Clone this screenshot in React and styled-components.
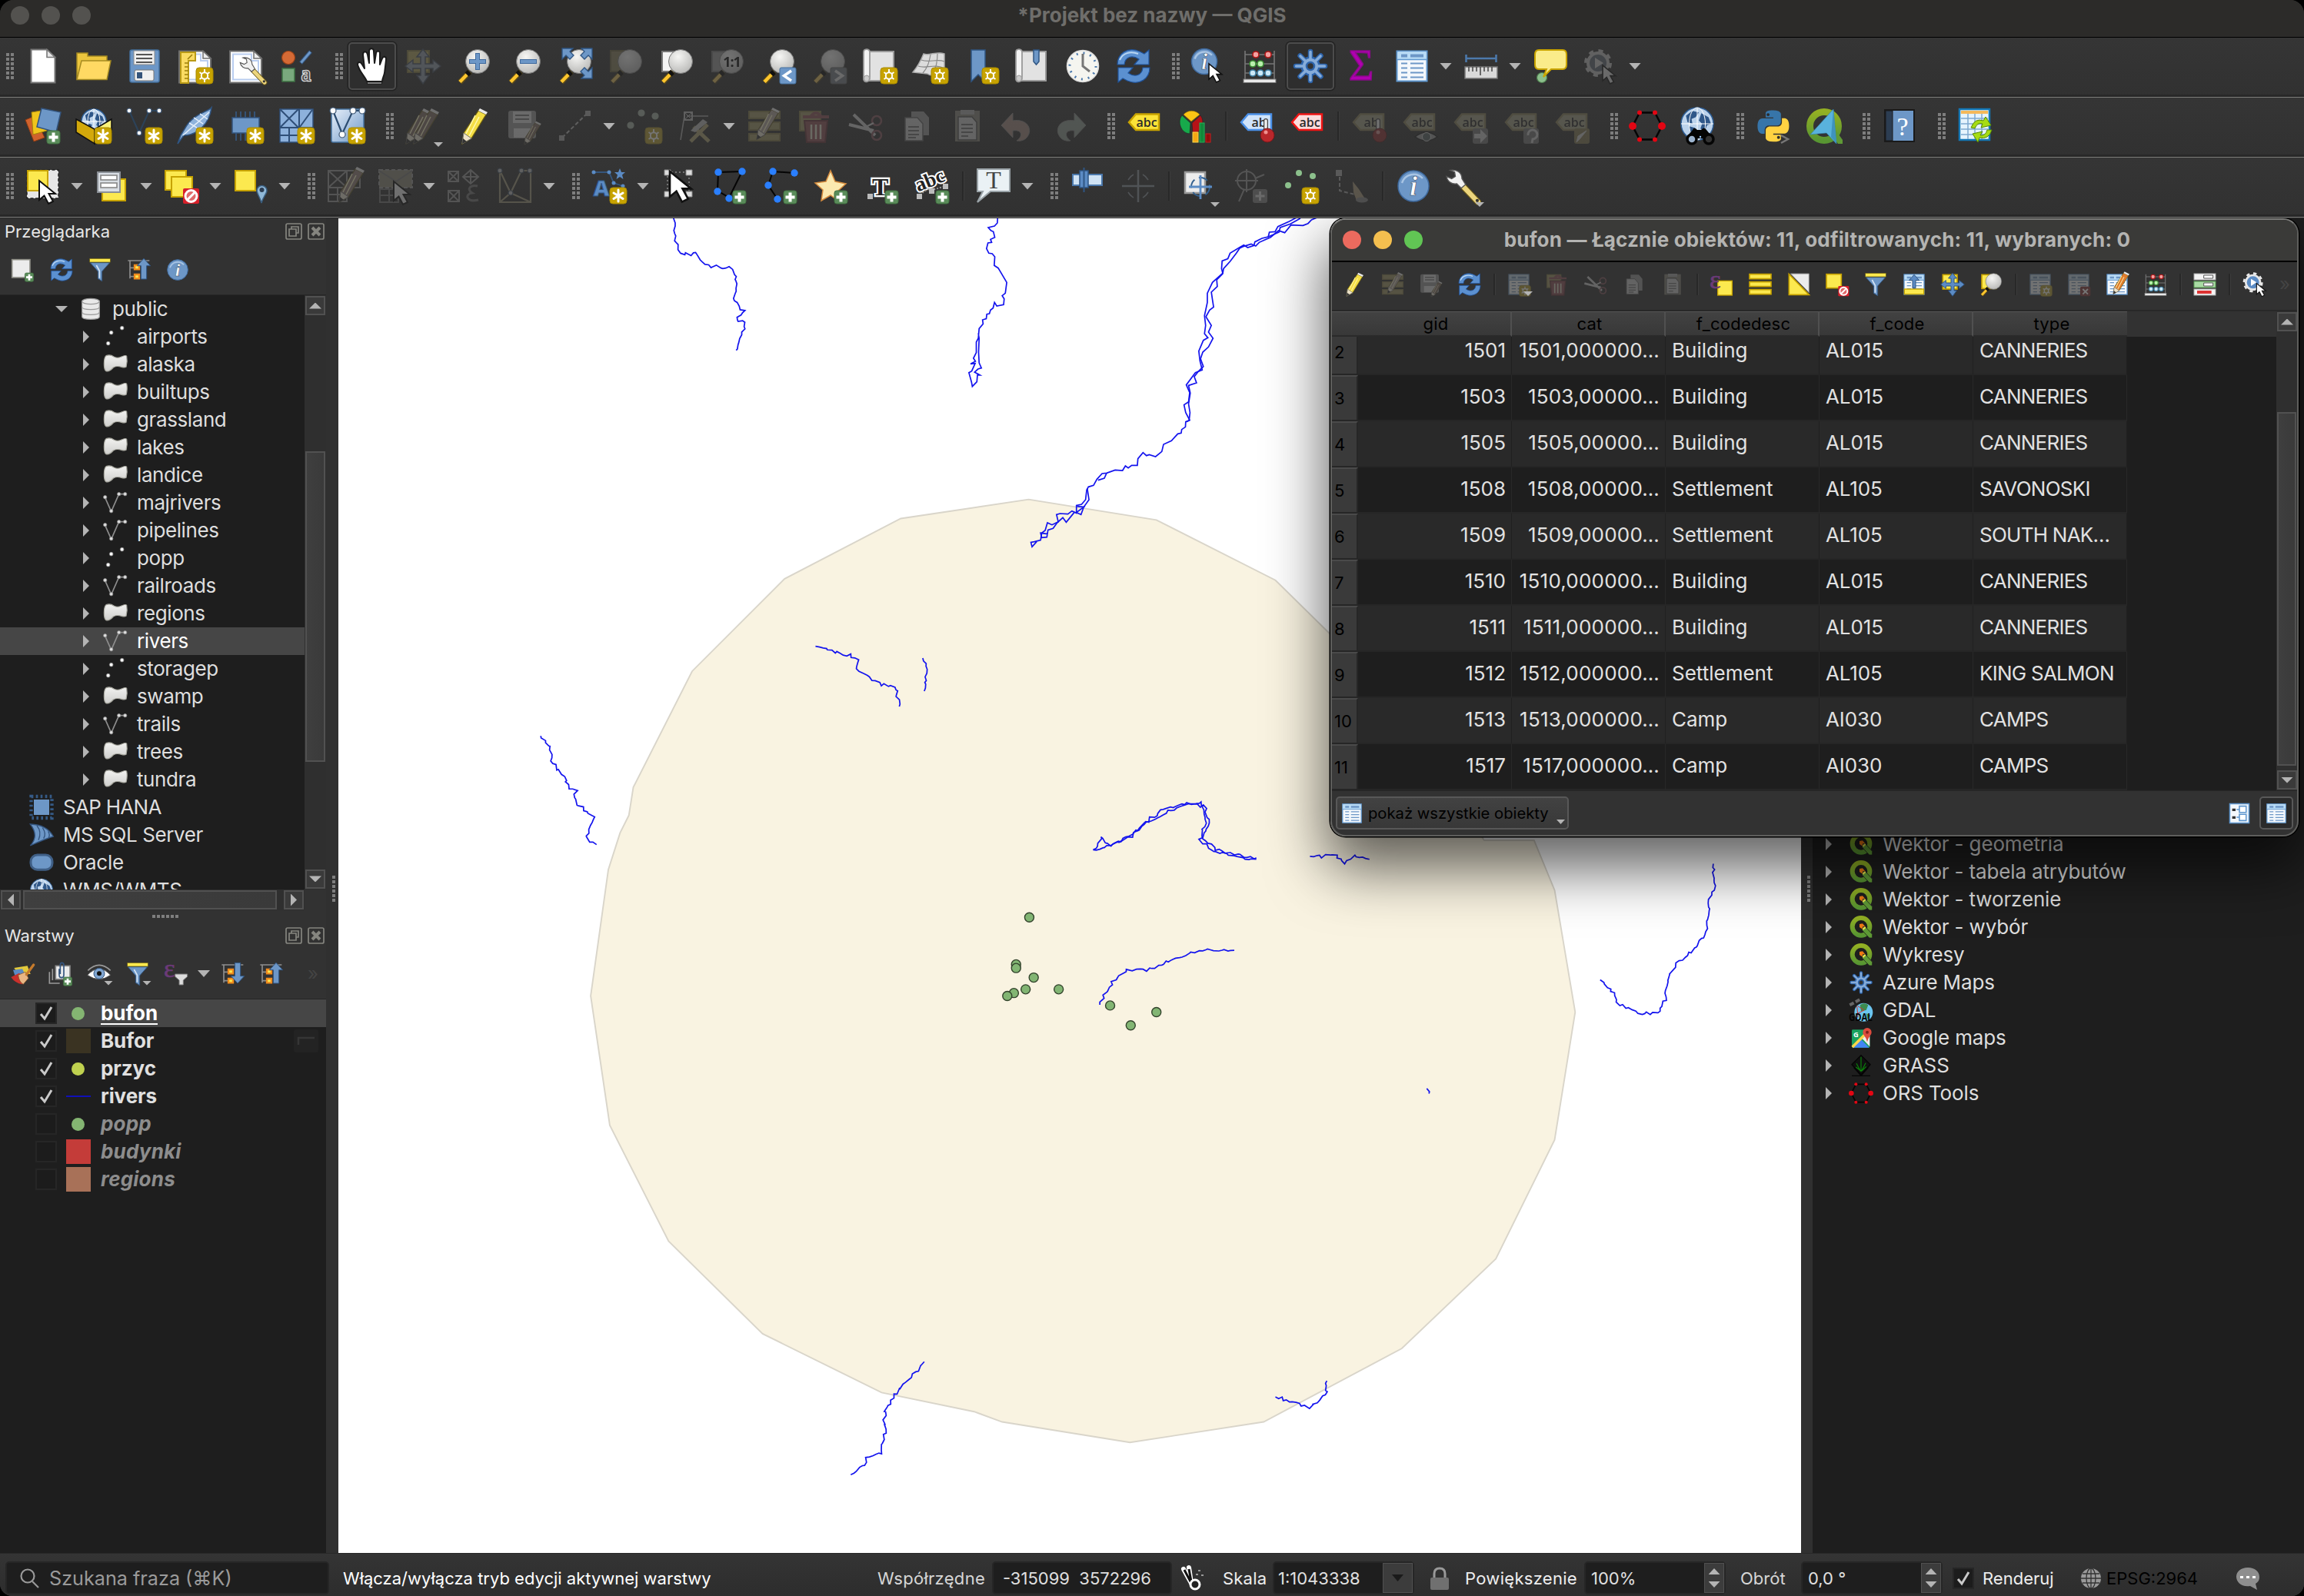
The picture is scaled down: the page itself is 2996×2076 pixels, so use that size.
import React from 'react';
import styled, { createGlobalStyle, css } from 'styled-components';

const sans = "Inter, 'Noto Sans', 'Liberation Sans', sans-serif";

const GlobalStyle = createGlobalStyle`
  * { box-sizing: border-box; }
  body { margin: 0; background: #000; overflow: hidden; font-family: ${sans}; color: #dedede; }
  svg { display: block; flex: none; overflow: visible; }
`;

/* ---------- icon parts ---------- */

const Badge = ({ kind }) => {
  if (kind === 'star')
    return (
      <g>
        <rect x="25" y="26" width="22" height="21" rx="4" fill="#c7a300" stroke="#a98a00" strokeWidth="1" />
        <path d="M36 29v15M30 33l12 7.500M42 33l-12 7.500" stroke="#fff" strokeWidth="3" strokeLinecap="round" />
      </g>
    );
  if (kind === 'sun')
    return (
      <g>
        <rect x="25" y="26" width="22" height="21" rx="4" fill="#c7a300" stroke="#a98a00" strokeWidth="1" />
        <path d="M36 28v17M29.500 32l13 9M42.500 32l-13 9" stroke="#fff" strokeWidth="2" />
        <circle cx="36" cy="36.500" r="4.200" fill="#c7a300" stroke="#fff" strokeWidth="2" />
      </g>
    );
  if (kind === 'plus')
    return (
      <g>
        <rect x="29" y="30" width="17" height="17" rx="3" fill="#5a8c5a" stroke="#417041" strokeWidth="1" />
        <path d="M37.500 32.500v12M31.500 38.500h12" stroke="#fff" strokeWidth="4" />
      </g>
    );
  return (
    <g>
      <rect x="26" y="27" width="21" height="20" rx="2" fill="#d8202a" />
      <circle cx="36.500" cy="37" r="7.500" fill="#e06a6a" stroke="#fff" strokeWidth="3" />
      <path d="M31.500 42l10-10" stroke="#fff" strokeWidth="3" />
    </g>
  );
};

const Cursor = ({ x, y, fill = '#fff', s = 1 }) => (
  <path
    transform={`translate(${x} ${y}) scale(${s})`}
    d="M0 0V25L6.500 19.500L12 30L18 27L12.500 17H21Z"
    fill={fill}
    stroke="#111"
    strokeWidth="2"
  />
);

const Lens = ({ children, fill = 'url(#lens)' }) => (
  <g>
    <path d="M19 31L6 45" stroke="#5b4a1a" strokeWidth="7" />
    <path d="M18 32L6 44.500" stroke="#ffc62e" strokeWidth="4.500" />
    <path d="M18.500 31.500L15 35" stroke="#111" strokeWidth="7" />
    <circle cx="29" cy="18" r="15.500" fill={fill} stroke="#777" strokeWidth="1" />
    {children}
  </g>
);

const Pencil = ({ body = '#f4de45', x = 0, y = 0, s = 1 }) => (
  <g transform={`translate(${x} ${y}) scale(${s})`}>
    <path d="M30 4L40 9L21 40L9 47L11 33Z" fill={body} stroke="#6b5d10" strokeWidth="1.200" />
    <path d="M26 10L14 34M31 12L18 37" stroke="#fff8b0" strokeWidth="1.500" />
    <path d="M30 4L32 1L42 6L40 9Z" fill="#e9e9e9" />
    <path d="M11 33L9 47L21 40Z" fill="#eee3c8" stroke="#777" strokeWidth="1" />
    <path d="M9 47l1-7l5 4z" fill="#333" />
  </g>
);

const Wrench = ({ x = 0, y = 0, s = 1 }) => (
  <g transform={`translate(${x} ${y}) scale(${s})`}>
    <path d="M22 24L42 45" stroke="#6a5a1c" strokeWidth="9" strokeLinecap="round" />
    <path d="M23 25L42 45" stroke="#ecd57d" strokeWidth="6.500" strokeLinecap="round" />
    <circle cx="41" cy="43" r="2.200" fill="#333" />
    <path
      d="M4 1.500C12 0 20 4 20 13L25 21L19 26L13 20C6 21 0 17 -1 10L6 13L11 10L10 4Z"
      fill="#f1f1f1"
      stroke="#555"
      strokeWidth="1.500"
    />
  </g>
);

const Gear = ({ light = '#86acd9', dark = '#2d64ab' }) => {
  const rays = [0, 45, 90, 135, 180, 225, 270, 315];
  return (
    <g>
      {rays.map((a) => (
        <path key={a} transform={`rotate(${a} 24 24)`} d="M24 16V5" stroke={dark} strokeWidth="6.500" strokeLinecap="round" />
      ))}
      <circle cx="24" cy="24" r="11.500" fill={light} stroke={dark} strokeWidth="2.500" />
      {rays.map((a) => (
        <path key={a} transform={`rotate(${a} 24 24)`} d="M24 16V5.500" stroke={light} strokeWidth="3.500" strokeLinecap="round" />
      ))}
      <circle cx="24" cy="24" r="5" fill="#333" stroke={dark} strokeWidth="2.500" />
    </g>
  );
};

const Refresh = () => (
  <g stroke="#1f5299" strokeWidth="1.200">
    <path d="M3 22C3 8 16 -2 32 5L38 8L44 3V22H25L31 15C22 9 13 12 12 22Z" fill="#5b90d0" />
    <path d="M45 26C45 40 32 50 16 43L10 40L4 45V26H23L17 33C26 39 35 36 36 26Z" fill="#5b90d0" />
    <path d="M6 16C10 7 20 4 30 8" stroke="#b9d6f2" strokeWidth="2" fill="none" />
  </g>
);

const Table = () => (
  <g>
    <rect x="4.500" y="4.500" width="39" height="39" fill="#f4f8fc" stroke="#5f97cf" strokeWidth="2" />
    <rect x="5.500" y="5.500" width="37" height="9.500" fill="#b9dcf6" />
    <path d="M4 15.500h40" stroke="#5f97cf" strokeWidth="1.500" />
    <path d="M10 10.500h8M22 10.500h17" stroke="#6d97c7" strokeWidth="4" />
    <path d="M10 20.500h8M22 20.500h17M10 26.500h8M22 26.500h17M10 32.500h8M22 32.500h17M10 38.500h8M22 38.500h17" stroke="#6d97c7" strokeWidth="2" />
  </g>
);

const Tag = ({ fill, stroke, text }) => (
  <g>
    <path d="M4 19L13 8.500H43V29H13Z" fill={fill} stroke={stroke} strokeWidth="2.500" />
    <text x="27" y="24.500" textAnchor="middle" fontFamily="Open Sans, sans-serif" fontWeight="600" fontSize="16" fill="#2c2c2c">
      {text}
    </text>
  </g>
);

const Pin = () => (
  <g>
    <path d="M36 17v12" stroke="#444" strokeWidth="6" strokeLinecap="round" />
    <path d="M36 17v12" stroke="#eee" strokeWidth="3.500" strokeLinecap="round" />
    <circle cx="38" cy="36" r="9" fill="#b9272b" stroke="#7c1518" strokeWidth="1" />
    <circle cx="36" cy="32" r="2.500" fill="#f0908f" />
  </g>
);

const Page = () => (
  <g>
    <path d="M3 4.500H34L44 14V45.500H3Z" fill="#fff" stroke="#6f6f6f" strokeWidth="2" />
    <path d="M7 8.500H31V17H40V41.500H7Z" fill="none" stroke="#b9cdf0" strokeWidth="2" />
    <path d="M34 4.500V14H44Z" fill="#ececec" stroke="#6f6f6f" strokeWidth="1.500" />
  </g>
);

const Scroll = () => (
  <g>
    <path d="M8 5H42V43H8Z" fill="#e2e2e2" stroke="#9a9a9a" strokeWidth="2" />
    <path d="M3 6C3 1 10 1 11 5V38C12 46 2 46 3 40Z" fill="#f3f3f3" stroke="#9a9a9a" strokeWidth="1.800" />
    <ellipse cx="7" cy="40" rx="3.500" ry="4" fill="#ccc" stroke="#9a9a9a" />
  </g>
);

const Funnel = () => (
  <g>
    <path d="M5 10H43L28 27V46L20 41V27Z" fill="#6d97c7" stroke="#33557d" strokeWidth="1.500" />
    <path d="M17 15L23 26V40" stroke="#d5e4f4" strokeWidth="2.500" fill="none" />
    <rect x="4" y="2" width="40" height="7" fill="#fce94f" stroke="#6b5d10" strokeWidth="1" />
  </g>
);

const TreeArrow = ({ down }) => (
  <g>
    <path d="M2 6H44M6 6V41M6 20H14M6 37H14" stroke="#8d8d8d" strokeWidth="2.500" fill="none" />
    <path d="M15 15h9v8h-9zM15 33h9v8h-9z" fill="#fce94f" stroke="#f08b1d" strokeWidth="3.500" />
    <path
      transform={down ? 'rotate(180 33 22)' : undefined}
      d="M33 2L46 16H38.500V42H27.500V16H20Z"
      fill="#6d97c7"
      stroke="#2f5583"
      strokeWidth="1.500"
    />
  </g>
);

const Globe = ({ cx, cy, r }) => (
  <g>
    <circle cx={cx} cy={cy} r={r} fill="#bcd3ec" stroke="#2e5e96" strokeWidth="1.500" />
    <path
      transform={`translate(${cx} ${cy}) scale(${r / 20})`}
      d="M-14 -10L-6 -16L2 -14L-2 -8L-7 -6L-6 0L-12 -2ZM5 -13L14 -8L17 0L12 2L9 10L4 6L6 0L2 -4ZM-10 3L-3 5L-5 13L-9 12Z"
      fill="#2f5789"
    />
    <path d={`M${cx - r} ${cy}H${cx + r}M${cx} ${cy - r}V${cy + r}`} stroke="#fff" strokeWidth="1" />
    <ellipse cx={cx} cy={cy} rx={r / 2} ry={r} fill="none" stroke="#fff" strokeWidth="1" />
  </g>
);

const Info = ({ cx = 24, cy = 24, r = 20 }) => (
  <g>
    <circle cx={cx} cy={cy} r={r} fill="#6d97c7" stroke="#3f6a9e" strokeWidth="1.500" />
    <path d={`M${cx - r * 0.75} ${cy - r * 0.2}A${r * 0.8} ${r * 0.8} 0 0 1 ${cx + r * 0.6} ${cy - r * 0.5}`} stroke="#a9c5e4" strokeWidth="2.500" fill="none" />
    <text x={cx} y={cy + r * 0.62} textAnchor="middle" fontFamily="Liberation Serif, serif" fontStyle="italic" fontWeight="700" fontSize={r * 1.8} fill="#fff" stroke="#33445a" strokeWidth=".6">
      i
    </text>
  </g>
);

const Abacus = () => {
  const rows = [
    [9, [19, 35], '#f4a0a0', '#b01515'],
    [21, [15, 25], '#b9efae', '#3c8f34'],
    [33, [15, 25, 35], '#cde9f7', '#3f7fa3'],
  ];
  return (
    <g>
      <path d="M5 4V42M43 4V42M5 9H43M5 21H43M5 33H43" stroke="#777" strokeWidth="1.600" />
      {rows.map(([y, xs, f, s]) => xs.map((x) => <circle key={`${x}-${y}`} cx={x} cy={y} r="4" fill={f} stroke={s} strokeWidth="1.600" />))}
      <rect x="3" y="41" width="42" height="4.500" fill="#e8e8e8" stroke="#777" />
    </g>
  );
};

const Abc = ({ children, x, y, size, ...rest }) => (
  <text x={x} y={y} fontFamily="Liberation Serif, serif" fontWeight="700" fontSize={size} fill="#fff" {...rest}>
    {children}
  </text>
);

const Node = ({ x, y, r = 3, fill = '#fff', stroke = '#3d5674' }) => <circle cx={x} cy={y} r={r} fill={fill} stroke={stroke} strokeWidth="1.200" />;

const Epsilon = ({ x, y, size }) => (
  <text x={x} y={y} fontFamily="Liberation Serif, serif" fontSize={size} fill="#6b3a78" stroke="#6b3a78" strokeWidth="1">
    ε
  </text>
);

const snake =
  'M14.250.180l.9.200.730.260.590.300.450.320.340.340.250.340.160.330.100.300.040.260.020.200V8.500l-.050.630-.130.550-.210.460-.260.380-.300.310-.330.250-.350.190-.350.140-.330.100-.300.070-.260.040H8.770l-.690.050-.590.140-.500.220-.410.270-.330.320-.270.350-.200.360-.150.370-.100.350-.070.320-.040.270-.020.210v3.060H3.170l-.490-.100-.320-.120-.350-.180-.360-.260-.360-.360-.350-.460-.320-.590-.280-.730-.210-.880-.140-1.050-.050-1.230.060-1.220.160-1.040.240-.870.320-.710.360-.570.400-.440.420-.330.420-.240.400-.160.360-.100.320-.050.400-.010h8.220v-.830H6.180l-.010-2.750-.020-.370.050-.340.110-.310.170-.280.250-.260.310-.230.380-.200.440-.180.510-.150.580-.120.640-.100.710-.060 1.610-.060z';

const icons = {
  new: (
    <g>
      <path d="M8.500 2.500H29L39.500 12.500V45.500H8.500Z" fill="#fff" stroke="#777" strokeWidth="2" />
      <path d="M29 2.500V12.500H39.500Z" fill="#e6e6e6" stroke="#777" strokeWidth="1.600" />
    </g>
  ),
  open: (
    <g>
      <path d="M2 7H16V11H41V18H9L2 41Z" fill="#ecc63e" stroke="#a58a22" strokeWidth="1.500" />
      <path d="M8 17H46L41 41.500H2Z" fill="#ffd963" stroke="#a58a22" strokeWidth="1.500" />
    </g>
  ),
  save: (
    <g>
      <rect x="5" y="3" width="38" height="42" rx="2.500" fill="#6d97c7" stroke="#44719f" strokeWidth="1.500" />
      <rect x="10" y="4" width="27" height="18" fill="#f0f0f0" stroke="#8b8b8b" />
      <path d="M13 9h21M13 14h21M13 19h21" stroke="#555" strokeWidth="1.800" />
      <rect x="11" y="29" width="25" height="14" rx="2" fill="#f0f0f0" stroke="#777" />
      <rect x="14" y="32" width="7" height="8" fill="#34537a" />
    </g>
  ),
  newlayout: (
    <g>
      <Page />
      <path d="M5 6H24V17H15V46H5Z" fill="#fadb62" stroke="#b99a16" strokeWidth="2" />
      <path d="M10 20h5M10 25h5M10 30h5M10 35h5M10 40h5M20 9l-6 6" stroke="#9a7e0a" strokeWidth="1.500" />
      <Badge kind="sun" />
    </g>
  ),
  layoutmgr: (
    <g>
      <Page />
      <Wrench x="17" y="12" s=".74" />
    </g>
  ),
  style: (
    <g>
      <circle cx="13" cy="13" r="8.500" fill="#d56a35" stroke="#9c4318" strokeWidth="1.200" />
      <path d="M29 20L42 5" stroke="#33547e" strokeWidth="5" />
      <path d="M29.500 19.500L41.500 5.500" stroke="#6d97c7" strokeWidth="3" />
      <rect x="5" y="27" width="16" height="17" fill="#7aa97e" stroke="#3f7345" strokeWidth="1.500" />
      <text x="36" y="43" textAnchor="middle" fontFamily="Liberation Serif, serif" fontSize="27" fill="#555" stroke="#ddd" strokeWidth="2.500" paintOrder="stroke">
        a
      </text>
    </g>
  ),
  hand: (
    <g>
      <path
        d="M17 44C15 38 7 31 5 22C5 18 9 18 11 22L14 27L12 9C12 4 17 4 18 9L20 20V5C20 0 26 0 26 5L27 20L29 7C30 3 35 4 34 9L34 22L37 14C39 10 43 12 42 16L40 33C39 38 37 40 37 44Z"
        fill="#fff"
        stroke="#1a1a1a"
        strokeWidth="2"
        strokeLinejoin="round"
      />
      <path d="M17 46H37" stroke="#1a1a1a" strokeWidth="3" />
      <path d="M18 46H36" stroke="#ddd" strokeWidth="1" />
    </g>
  ),
  pansel: (
    <g>
      <rect x="4" y="4" width="28" height="28" fill="#b8a53c" stroke="#8a7b2e" strokeWidth="2" />
      <path d="M24 2l8 10h-5v9h10v-5l10 8l-10 8v-5H27v9h5l-8 11l-8-11h5v-9H11v5L1 24l10-8v5h10V12h-5z" fill="#8b9db4" stroke="#44556d" strokeWidth="1.500" />
    </g>
  ),
  zoomin: (
    <Lens>
      <path d="M29 7V29M18 18H40" stroke="#3f6a9e" strokeWidth="6" />
      <path d="M29 8V28M19 18H39" stroke="#6d97c7" strokeWidth="4" />
    </Lens>
  ),
  zoomout: (
    <Lens>
      <path d="M18 18H40" stroke="#3f6a9e" strokeWidth="6" />
      <path d="M19 18H39" stroke="#6d97c7" strokeWidth="4" />
    </Lens>
  ),
  zoomfull: (
    <g>
      <Lens />
      <g fill="#6d97c7" stroke="#2f5583" strokeWidth="1.300">
        <path d="M7 1H21L17 5L22 10L17 15L12 10L7 15Z" />
        <path d="M46 1H32L36 5L31 10L36 15L41 10L46 15Z" />
        <path d="M46 40H32L36 36L31 31L36 26L41 31L46 26Z" />
      </g>
    </g>
  ),
  zoomsel: (
    <g>
      <rect x="4" y="4" width="30" height="27" fill="#8d824a" stroke="#6e6532" strokeWidth="2" />
      <Lens />
    </g>
  ),
  zoomlayer: (
    <g>
      <rect x="5" y="5" width="28" height="26" fill="#f4f4f4" stroke="#777" strokeWidth="2" />
      <Lens />
    </g>
  ),
  zoomnative: (
    <g>
      <rect x="4" y="5" width="30" height="26" fill="#999" stroke="#777" strokeWidth="2" />
      <Lens>
        <text x="29.500" y="25" textAnchor="middle" fontFamily="Open Sans, sans-serif" fontWeight="700" fontSize="18" letterSpacing="-1" fill="#111">
          1:1
        </text>
      </Lens>
    </g>
  ),
  zoomlast: (
    <g>
      <Lens />
      <rect x="26" y="26" width="21" height="21" rx="2" fill="#6d97c7" stroke="#44719f" />
      <path d="M41 30L31.500 36.500L41 43" stroke="#fff" strokeWidth="3.500" fill="none" />
    </g>
  ),
  zoomnext: (
    <g>
      <Lens />
      <rect x="26" y="26" width="21" height="21" rx="2" fill="#77828e" stroke="#666" />
      <path d="M32 30L41.500 36.500L32 43" stroke="#ddd" strokeWidth="3.500" fill="none" />
    </g>
  ),
  newmap: (
    <g>
      <Scroll />
      <Badge kind="sun" />
    </g>
  ),
  new3d: (
    <g>
      <path d="M15 8C22 11 33 4 42 8V34C33 30 28 40 20 34L1 32C6 26 11 18 15 8Z" fill="#dcdcdc" stroke="#aaa" strokeWidth="1.500" />
      <path d="M12 16C22 20 33 14 42 18M8 24C18 28 30 20 42 27M24 9C22 20 20 26 14 33M33 8C33 18 31 26 28 34" stroke="#888" strokeWidth="1.200" fill="none" />
      <Badge kind="sun" />
    </g>
  ),
  bookmark: (
    <g>
      <path d="M14 3H32V44L23 35L14 44Z" transform="translate(-3 0)" fill="#6d97c7" stroke="#2f5583" strokeWidth="1.500" />
      <Badge kind="sun" />
    </g>
  ),
  bookmarks: (
    <g>
      <Scroll />
      <path d="M26 3H33V18L29.500 22L26 18Z" fill="#6d97c7" stroke="#2f5583" strokeWidth="1.500" />
    </g>
  ),
  clock: (
    <g>
      <circle cx="24" cy="24" r="20.500" fill="#f5f5f0" stroke="#ddd" strokeWidth="1.500" />
      <circle cx="24" cy="24" r="17" fill="none" stroke="#4c79ac" strokeWidth="3" strokeDasharray="2 6.900" />
      <path d="M24 8V24L33 31" stroke="#777" strokeWidth="3" fill="none" />
    </g>
  ),
  refresh: <Refresh />,
  identify: (
    <g>
      <Info cx={18} cy={18} r={16.5} />
      <Cursor x="24" y="21" s=".8" />
    </g>
  ),
  abacus: <Abacus />,
  gear: <Gear />,
  sigma: (
    <text x="24" y="42" textAnchor="middle" fontFamily="Liberation Serif, serif" fontWeight="400" fontSize="56" fill="#b100b1" stroke="#8a0a8a" strokeWidth="1.500">
      Σ
    </text>
  ),
  table: <Table />,
  ruler: (
    <g>
      <path d="M4 14H44M4.500 9V19M43.500 9V19" stroke="#4c79ac" strokeWidth="2.500" />
      <rect x="3" y="25" width="42" height="15" fill="#d9d9d9" stroke="#777" strokeWidth="1.500" />
      <path d="M8 25v6M13 25v6M18 25v6M23 25v11M28 25v6M33 25v6M38 25v6" stroke="#444" strokeWidth="1.500" />
    </g>
  ),
  tip: (
    <g>
      <circle cx="13" cy="39" r="6.500" fill="#8cc08c" stroke="#4e7d4e" strokeWidth="1.200" />
      <path d="M9 3H40Q45 3 45 9V22Q45 28 40 28H25L15 38L19 28H9Q4 28 4 22V9Q4 3 9 3Z" fill="#faec8a" stroke="#c9a400" strokeWidth="2" />
    </g>
  ),
  gearcursor: (
    <g>
      <circle cx="20" cy="20" r="13" fill="#5c6a7b" stroke="#c0c0c0" strokeWidth="4" />
      <circle cx="20" cy="20" r="16" fill="none" stroke="#c0c0c0" strokeWidth="4" strokeDasharray="6 6.560" />
      <path d="M16 13L27 20L16 27Z" fill="#ccc" />
      <Cursor x="26" y="23" s=".8" fill="#ddd" />
    </g>
  ),
  layers: (
    <g>
      <path d="M1 16L13 11L26 39L12 44Z" fill="#d0622d" stroke="#8d3b12" />
      <path d="M9 6L27 3L29 30L11 35Z" fill="#f0c51c" stroke="#a5830a" />
      <path d="M22 1L47 6L41 32L16 25Z" fill="#6d97c7" stroke="#33547e" strokeWidth="1.500" />
      <Badge kind="plus" />
    </g>
  ),
  geopackage: (
    <g>
      <Globe cx={24} cy={18} r={16} />
      <path d="M1 15L25 28V47L1 32Z" fill="#d3a90b" stroke="#111" strokeWidth="1.500" />
      <path d="M47 15L25 28V47L47 32Z" fill="#fdf37a" stroke="#111" strokeWidth="1.500" />
      <Badge kind="star" />
    </g>
  ),
  shapefile: (
    <g>
      <path d="M4 4L17 33L30 4H43" stroke="#2c4258" strokeWidth="2.200" fill="none" />
      <Node x="4" y="4" />
      <Node x="17" y="33" />
      <Node x="30" y="4" />
      <Node x="43" y="4" />
      <Badge kind="star" />
    </g>
  ),
  spatialite: (
    <g>
      <path d="M45 0C40 6 20 8 10 28L5 36L1 47L9 36C26 36 42 22 45 0Z" fill="#8fb3dc" stroke="#2f5583" strokeWidth="1.500" />
      <path d="M42 6L8 36M16 20L26 26M22 13L34 21M30 8L40 15" stroke="#e5effa" strokeWidth="1.500" />
      <Badge kind="star" />
    </g>
  ),
  memory: (
    <g>
      <path d="M11 5v38M17 5v38M23 5v38M29 5v38M35 5v38" stroke="#355a86" strokeWidth="1.600" />
      <rect x="6" y="13" width="35" height="20" fill="#6d97c7" stroke="#33547e" strokeWidth="1.500" />
      <Badge kind="star" />
    </g>
  ),
  mesh: (
    <g>
      <rect x="2" y="2" width="43" height="43" fill="#8db1dc" stroke="#2f4f78" strokeWidth="1.500" />
      <path d="M2 26H45M27 2V26M2 2L26 26M26 2L2 26M44 3L28 25M14 27V45M27 27V45M2 36H27" stroke="#2f4f78" strokeWidth="2" />
      <Badge kind="star" />
    </g>
  ),
  vlayer: (
    <g>
      <rect x="3" y="2" width="42" height="43" rx="2" fill="url(#vgrad)" stroke="#44719f" strokeWidth="1.500" />
      <path d="M5 4L17 34L31 4H44" stroke="#2c4c70" strokeWidth="2.200" fill="none" />
      <Node x="5" y="4" r="4" />
      <Node x="17" y="35" r="4" />
      <Node x="31" y="4" r="4" />
      <Node x="43" y="4" r="4" />
      <Badge kind="star" />
    </g>
  ),
  edits: (
    <g>
      <Pencil body="#8d6f62" x="-7" />
      <Pencil body="#8d6f62" x="3" />
    </g>
  ),
  pencil: <Pencil />,
  saveedits: (
    <g>
      <rect x="3" y="4" width="36" height="36" rx="3" fill="#999" />
      <rect x="9" y="5" width="24" height="15" fill="#ddd" />
      <path d="M12 10h18M12 15h18" stroke="#555" strokeWidth="1.600" />
      <rect x="10" y="27" width="22" height="12" fill="#ddd" />
      <Pencil body="#8d6f62" x="18" y="17" s=".66" />
    </g>
  ),
  digitize: (
    <g>
      <path d="M7 39L40 7" stroke="#bbb" strokeWidth="2" strokeDasharray="5 3" />
      <rect x="3" y="36" width="7" height="7" fill="#aaa" />
      <rect x="37" y="4" width="7" height="7" fill="#aaa" />
    </g>
  ),
  points: (
    <g>
      <Node x="20" y="7" r="4" fill="#9fb39f" stroke="#9fb39f" />
      <Node x="38" y="11" r="4" fill="#9fb39f" stroke="#9fb39f" />
      <Node x="6" y="23" r="4" fill="#9fb39f" stroke="#9fb39f" />
      <Badge kind="sun" />
    </g>
  ),
  vertex: (
    <g>
      <path d="M10 11L5 42M13 11H41" stroke="#aaa" strokeWidth="1.600" />
      <rect x="10" y="6" width="10" height="10" fill="none" stroke="#bbb" strokeWidth="2" />
      <path d="M11 7l8 8M19 7l-8 8" stroke="#bbb" />
      <path d="M18 44L40 22" stroke="#b5a65c" strokeWidth="5" />
      <path d="M22 25L42 44" stroke="#b5a65c" strokeWidth="5" />
      <path d="M18 30L34 15L40 19L24 32Z" fill="#bbb" />
    </g>
  ),
  modify: (
    <g>
      <path d="M4 5H44V14H4ZM4 19H44V29H4ZM4 34H44V43H4Z" fill="#a89a50" stroke="#8a7c33" strokeWidth="2" />
      <Pencil body="#b8a596" x="6" y="-1" s=".9" />
    </g>
  ),
  trash: (
    <g>
      <rect x="4" y="5" width="27" height="25" fill="#a89a50" stroke="#8a7c33" strokeWidth="2" />
      <path d="M10 17H40L37 45H13Z" fill="#a94e57" stroke="#7d333b" strokeWidth="2" />
      <path d="M8 12H42M18 12Q25 2 32 12" stroke="#a94e57" strokeWidth="4" fill="none" />
      <path d="M19 22V41M25 22V41M31 22V41" stroke="#ddb" strokeWidth="2.500" />
    </g>
  ),
  cut: (
    <g fill="none" stroke="#ccc" strokeWidth="2.500">
      <path d="M2 22L34 30M8 9L36 36" strokeWidth="4" />
      <circle cx="38" cy="17" r="6" stroke="#9c5560" />
      <circle cx="38" cy="36" r="6" stroke="#9c5560" />
      <path d="M22 26L34 20" />
    </g>
  ),
  copy: (
    <g>
      <path d="M17 5H33L40 13V36H17Z" fill="#999" />
      <path d="M9 13H25L32 21V43H9Z" fill="#ccc" stroke="#666" strokeWidth="1.500" />
      <path d="M13 25h14M13 30h14M13 35h14M13 39h10" stroke="#555" strokeWidth="1.600" />
    </g>
  ),
  paste: (
    <g>
      <rect x="8" y="4" width="32" height="40" fill="#8b8775" />
      <path d="M12 12H30L36 19V42H12Z" fill="#ccc" stroke="#555" strokeWidth="1.500" />
      <path d="M15 3H33V9H15Z" fill="#aaa" />
      <path d="M16 22h15M16 27h15M16 32h15M16 37h9" stroke="#555" strokeWidth="1.600" />
    </g>
  ),
  undo: <path d="M17 7V17C36 14 42 28 37 36C34 42 28 44 22 43C30 38 30 28 17 30V39L2 23Z" fill="#b08a7a" stroke="#888" />,
  redo: <path d="M31 7V17C12 14 6 28 11 36C14 42 20 44 26 43C18 38 18 28 31 30V39L46 23Z" fill="#8aa090" stroke="#888" />,
  tag: <Tag fill="#fbe338" stroke="#c9a400" text="abc" />,
  chart: (
    <g>
      <path d="M19 18L9 9A14 14 0 0 1 30 9Z" fill="#fdc414" stroke="#8b6b00" strokeWidth=".6" />
      <path d="M18 20L7 10A14 15 0 0 0 17 34Z" fill="#17a94b" stroke="#222" strokeWidth=".6" />
      <path d="M20 20L31 10A14 15 0 0 1 21 34Z" fill="#b51217" stroke="#222" strokeWidth=".6" />
      <rect x="21" y="32" width="7" height="13" fill="#f6a713" stroke="#f7d94c" />
      <rect x="30" y="20" width="6" height="25" fill="#12883b" stroke="#22b358" />
      <rect x="38" y="34" width="6" height="11" fill="#8e0d0d" stroke="#c81d1d" />
    </g>
  ),
  tagpin: (
    <g>
      <Tag fill="#cfe3fb" stroke="#4a90e8" text="ab " />
      <Pin />
    </g>
  ),
  tagred: <Tag fill="#fbdcdc" stroke="#f01414" text="abc" />,
  tagpinoff: (
    <g>
      <Tag fill="#a59f7a" stroke="#8f8248" text="ab" />
      <Pin />
    </g>
  ),
  tageye: (
    <g>
      <Tag fill="#a59f7a" stroke="#8f8248" text="abc" />
      <path d="M18 38Q33 26 47 38Q33 48 18 38Z" fill="#999" stroke="#222" strokeWidth="1.500" />
      <circle cx="33" cy="38" r="5.500" fill="#566" stroke="#ccc" />
    </g>
  ),
  tagmove: (
    <g>
      <Tag fill="#a59f7a" stroke="#8f8248" text="abc" />
      <rect x="27" y="27" width="20" height="20" rx="3" fill="#777" />
      <path d="M29 34h8v-6l9 9l-9 9v-6h-8z" fill="#ccc" />
    </g>
  ),
  tagrotate: (
    <g>
      <Tag fill="#a59f7a" stroke="#8f8248" text="abc" />
      <rect x="27" y="27" width="20" height="20" rx="3" fill="#777" />
      <path d="M33 36a6 6 0 1 1 6 5l-1 5" stroke="#ccc" strokeWidth="3" fill="none" />
    </g>
  ),
  tagedit: (
    <g>
      <Tag fill="#a59f7a" stroke="#8f8248" text="abc" />
      <rect x="27" y="27" width="20" height="20" rx="3" fill="#8a7d40" />
      <path d="M43 30l-9 11l-4 4l2-8z" fill="#ccc" stroke="#ccc" />
    </g>
  ),
  ors: (
    <g>
      <path d="M14 6.500H34L43 24L34 41.500H14L5 24Z" fill="none" stroke="#050505" strokeWidth="2.500" />
      <g fill="#e30613">
        <circle cx="5" cy="24" r="5" />
        <circle cx="43" cy="24" r="5" />
        <circle cx="14" cy="6.500" r="3" />
        <circle cx="34" cy="6.500" r="3" />
        <circle cx="14" cy="41.500" r="3" />
        <circle cx="34" cy="41.500" r="3" />
      </g>
    </g>
  ),
  metasearch: (
    <g>
      <Globe cx={23} cy={21} r={21} />
      <path d="M17 29Q19 24 23 29H28Q32 24 35 29L44 40H8Z" fill="#050505" />
      <circle cx="16" cy="41" r="6" fill="#9db4cf" stroke="#050505" strokeWidth="3.500" />
      <circle cx="38" cy="41" r="6" fill="#333" stroke="#050505" strokeWidth="3.500" />
      <circle cx="27" cy="38" r="1.200" fill="#9cf" />
    </g>
  ),
  python: (
    <g>
      <g transform="translate(3.500 3.500) scale(1.700)">
        <path d={snake} fill="#3775a9" />
        <circle cx="8" cy="3.300" r="1.150" fill="#2c2c2c" />
        <g transform="rotate(180 12 12)">
          <path d={snake} fill="#ffd242" />
          <circle cx="8" cy="3.300" r="1.150" fill="#2c2c2c" />
        </g>
      </g>
      <path d="M34 36L43 41L34 46" stroke="#777" strokeWidth="2.500" fill="none" />
    </g>
  ),
  qgis: (
    <g>
      <circle cx="24" cy="24" r="18.500" fill="none" stroke="url(#qg)" strokeWidth="9" />
      <path d="M30 32L38 28L48 42V47H42Z" fill="#5f9a36" />
      <path d="M36 2L40 47L27 33L6 35Z" fill="#59b2dc" stroke="#2f7fa6" strokeWidth=".6" />
      <path d="M36 2L40 47L33 38Z" fill="#3f93bd" />
    </g>
  ),
  help: (
    <g>
      <rect x="5" y="3" width="38" height="41" fill="#6d97c7" stroke="#1a1a1a" strokeWidth="2" />
      <rect x="6" y="4" width="9" height="39" fill="#2c3d52" stroke="#1a1a1a" />
      <text x="28" y="36" textAnchor="middle" fontFamily="Liberation Serif, serif" fontSize="34" fill="#fff">
        ?
      </text>
    </g>
  ),
  sheet: (
    <g>
      <rect x="4" y="2" width="39" height="40" fill="#e6f4fd" stroke="#1477b5" strokeWidth="2.500" />
      <rect x="6" y="4" width="35" height="4" fill="#f5b95a" />
      <path d="M6 14H41M6 21H41M6 28H41M6 35H41M15 8V41M24 8V41M33 8V41" stroke="#7fa9d0" strokeWidth="1.500" />
      <path d="M19 26Q24 13 35 17L38 12L45 23L32 26L34 21Q27 19 24 27Z" fill="#a6dc14" stroke="#568a06" strokeWidth="1" />
      <path d="M46 29Q42 42 30 39L28 45L21 34L34 31L31 36Q38 37 40 29Z" fill="#a6dc14" stroke="#568a06" strokeWidth="1" />
    </g>
  ),
  select: (
    <g>
      <rect x="3" y="3" width="41" height="37" fill="#e6e6e6" stroke="#222" strokeWidth="1.500" strokeDasharray="4 2.500" />
      <rect x="4" y="4" width="26" height="26" fill="#fce94f" stroke="#c7a300" strokeWidth="2" />
      <Cursor x="19" y="17" />
    </g>
  ),
  selform: (
    <g>
      <rect x="11" y="15" width="30" height="28" fill="#fce94f" stroke="#c7a300" strokeWidth="2" />
      <rect x="5" y="6" width="29" height="26" fill="#d9dee4" stroke="#8b9097" strokeWidth="2" />
      <rect x="9" y="10" width="21" height="6" fill="#fff" stroke="#888" strokeWidth="1.600" />
      <rect x="9" y="20" width="21" height="6" fill="#fff" stroke="#888" strokeWidth="1.600" />
    </g>
  ),
  deselect: (
    <g>
      <rect x="3" y="4" width="27" height="25" fill="#fce94f" stroke="#c7a300" strokeWidth="2" />
      <rect x="11" y="12" width="27" height="26" fill="#fce94f" stroke="#c7a300" strokeWidth="2" />
      <Badge kind="no" />
    </g>
  ),
  selloc: (
    <g>
      <rect x="4" y="4" width="26" height="26" fill="#fce94f" stroke="#c7a300" strokeWidth="2" />
      <path d="M38 46C36 38 32 34 32 30A6.500 6.500 0 0 1 45 30C45 34 40 38 38 46Z" fill="#8fb8d8" stroke="#3b5f80" strokeWidth="1.500" />
      <circle cx="38.500" cy="29" r="3" fill="#2c3d52" />
    </g>
  ),
  meshedit: (
    <g>
      <path d="M3 4H44V26H27V44H3ZM3 26H27V4M3 4L27 26M27 4L3 26M15 26V44M3 35H27M44 4L30 25" stroke="#999" strokeWidth="2" fill="none" />
      <Pencil body="#9c7f75" x="8" y="-2" />
    </g>
  ),
  meshsel: (
    <g>
      <path d="M3 3H46V26H3Z" fill="#8f8a70" stroke="#999" strokeWidth="2" strokeDasharray="5 3" />
      <path d="M3 4L25 18L46 4M4 28H28V45H4ZM16 28V45M4 36H28" stroke="#777" strokeWidth="2" fill="none" />
      <Cursor x="22" y="18" fill="#eee" />
    </g>
  ),
  meshtrans: (
    <g stroke="#999" strokeWidth="2" fill="none">
      <path d="M3 5H16V18H3ZM3 5L16 18M16 5L3 18M3 30H17V44H3ZM3 30L17 44M17 30L3 44M32 3L42 12L32 21L22 12ZM22 12H42M32 3V21" />
      <path d="M41 24C32 22 26 28 34 33C24 34 26 46 42 42" stroke="#777" strokeWidth="3" />
    </g>
  ),
  meshdigit: (
    <g>
      <path d="M4 4L18 33L32 4H43M4 4V45H44V4M18 33L4 45M18 33L44 45" stroke="#a59a70" strokeWidth="2.200" fill="none" />
      <Node x="4" y="4" fill="#bbb" />
      <Node x="18" y="33" fill="#bbb" />
      <Node x="32" y="4" fill="#bbb" />
      <Node x="43" y="4" fill="#bbb" />
    </g>
  ),
  annolayer: (
    <g>
      <path d="M4 6H24L30 20L42 24" stroke="#35567d" strokeWidth="1.800" fill="none" />
      <path d="M38 1l2 5h5l-4 3.500l1.500 5.500l-4.500-3l-4.500 3L35 9.500L31 6h5z" fill="#5b8bc4" />
      <circle cx="4" cy="6" r="2.500" fill="#5b8bc4" />
      <circle cx="24" cy="6" r="2.500" fill="#5b8bc4" />
      <circle cx="30" cy="20" r="2.500" fill="#5b8bc4" />
      <circle cx="42" cy="24" r="2.500" fill="#5b8bc4" />
      <text x="14" y="37" textAnchor="middle" fontFamily="Open Sans, sans-serif" fontWeight="800" fontSize="29" fill="#5b8bc4" stroke="#2f5583">
        A
      </text>
      <Badge kind="star" />
    </g>
  ),
  annosel: (
    <g>
      <rect x="10" y="6" width="28" height="28" fill="none" stroke="#888" strokeWidth="1.500" strokeDasharray="2 3" />
      <path d="M6 3h8v7h-8zM34 3h8v7h-8zM6 31h8v7h-8zM34 31h8v7h-8z" fill="#ddd" stroke="#888" />
      <Cursor x="13" y="5" s="1.320" />
    </g>
  ),
  annopoly: (
    <g>
      <path d="M10 6L41 5L24 39L9 30Z" fill="none" stroke="#050505" strokeWidth="2" />
      <g fill="#2a7fff">
        <circle cx="10" cy="6" r="4.700" />
        <circle cx="41" cy="5" r="4.700" />
        <circle cx="24" cy="40" r="4.700" />
        <circle cx="9" cy="31" r="4.700" />
      </g>
      <Badge kind="plus" />
    </g>
  ),
  annoline: (
    <g>
      <path d="M43 7L15 5L9 23L21 41" fill="none" stroke="#050505" strokeWidth="2" />
      <g fill="#2a7fff">
        <circle cx="43" cy="7" r="4.700" />
        <circle cx="15" cy="5" r="4.700" />
        <circle cx="9" cy="23" r="4.700" />
        <circle cx="21" cy="41" r="4.700" />
      </g>
      <Badge kind="plus" />
    </g>
  ),
  annostar: (
    <g>
      <path d="M24 4L30 18L44 21L34 30L35 44L24 36L12 43L14 29L4 20L18 18Z" fill="#fbe9b0" stroke="#d58b3e" strokeWidth="1.500" />
      <Badge kind="plus" />
    </g>
  ),
  annotext: (
    <g>
      <Abc x="12" y="36" size="32" fill="#222" stroke="#fff" strokeWidth="4.500" paintOrder="stroke">
        T
      </Abc>
      <rect x="6" y="34" width="7" height="7" fill="#bbb" />
      <Badge kind="plus" />
    </g>
  ),
  annocurve: (
    <g>
      <g transform="rotate(-22 24 20)">
        <Abc x="3" y="24" size="26" fill="#222" stroke="#fff" strokeWidth="4" paintOrder="stroke">
          abc
        </Abc>
      </g>
      <path d="M9 36Q16 26 28 28L42 24" stroke="#999" strokeWidth="2" strokeDasharray="2 2" fill="none" />
      <path d="M4 34h7v7h-7zM20 27h7v7h-7zM38 21h7v7h-7z" fill="#bbb" />
      <Badge kind="plus" />
    </g>
  ),
  callout: (
    <g>
      <path d="M3 2H45V31H20L3 45L10 31H3Z" fill="#eaf1f5" stroke="#9aa3a8" strokeWidth="2" />
      <text x="24" y="27" textAnchor="middle" fontFamily="Liberation Serif, serif" fontSize="32" fill="#444">
        T
      </text>
    </g>
  ),
  snapcad: (
    <g>
      <rect x="5" y="9" width="38" height="14" fill="#cfe2f4" stroke="#4c79ac" strokeWidth="2" />
      <rect x="14" y="4" width="11" height="22" fill="#5b8bc4" stroke="#2f5583" strokeWidth="1.500" />
      <path d="M19.500 0V32" stroke="#2f5583" strokeWidth="2" />
    </g>
  ),
  crosshair: (
    <g stroke="#8a97a5" strokeWidth="2.500" fill="none">
      <path d="M24 3V45M3 24H45" />
      <path d="M11 16Q14 11 18 9M37 16Q34 11 30 9M11 32Q14 37 18 39M37 32Q34 37 30 39" strokeWidth="1.500" />
    </g>
  ),
  snapping: (
    <g>
      <rect x="5" y="6" width="26" height="27" fill="#ececec" stroke="#9a9a9a" strokeWidth="2.500" />
      <circle cx="25" cy="25" r="12" fill="none" stroke="#34618f" strokeWidth="2" strokeDasharray="12 6" />
      <path d="M25 10V41M10 25H40" stroke="#5b8bc4" strokeWidth="2.800" />
    </g>
  ),
  tracing: (
    <g stroke="#999" strokeWidth="2" fill="none">
      <circle cx="19" cy="17" r="12" />
      <path d="M19 2V32M4 17H34M9 44L16 28M30 14L42 9" />
      <rect x="27" y="28" width="19" height="18" rx="3" fill="#888" stroke="none" />
      <path d="M36.500 31v12M30.500 37h12" stroke="#ddd" strokeWidth="3" />
    </g>
  ),
  snapnew: (
    <g>
      <circle cx="21" cy="7" r="4" fill="#8cc08c" />
      <circle cx="39" cy="11" r="4" fill="#8cc08c" />
      <circle cx="7" cy="23" r="4" fill="#8cc08c" />
      <Badge kind="sun" />
    </g>
  ),
  broom: (
    <g>
      <rect x="3" y="3" width="8" height="8" fill="#aaa" />
      <path d="M8 12V30L28 35" stroke="#aaa" strokeWidth="2" strokeDasharray="5 3" fill="none" />
      <path d="M25 18L33 28L40 39L30 43L26 32Z" fill="#b59c70" />
      <ellipse cx="37" cy="42" rx="8" ry="3.500" fill="#888" />
    </g>
  ),
  info: <Info />,
  wrench: <Wrench x="2" y="2" s=".95" />,
  addlayer: (
    <g>
      <rect x="4" y="4" width="35" height="35" fill="#ececec" stroke="#8d8d85" strokeWidth="2.500" />
      <Badge kind="plus" />
    </g>
  ),
  funnel: <Funnel />,
  collapse: <TreeArrow />,
  expand: <TreeArrow down />,
  brush: (
    <g>
      <path d="M8 12L34 8L40 24L16 24Z" fill="#e2c93c" />
      <path d="M6 16L24 14L30 26L10 28Z" fill="#5b8bc4" />
      <path d="M2 30L18 22L32 36L24 44Q10 42 2 30Z" fill="#c9302c" />
      <path d="M16 26L30 20L36 32L26 44Q18 40 16 26Z" fill="#e8b684" stroke="#7a4c1c" />
      <path d="M32 25L46 6" stroke="#c57a2c" strokeWidth="5" strokeLinecap="round" />
    </g>
  ),
  group: (
    <g>
      <path d="M2 20V42H22M8 14V36" stroke="#999" strokeWidth="2.500" fill="none" />
      <rect x="14" y="8" width="28" height="26" fill="#ececec" stroke="#888" strokeWidth="2.500" />
      <path d="M21 14V26Q21 31 26 31Q30 31 30 26V6Q30 2 26 2Q23 2 23 6V24" stroke="#33547e" strokeWidth="2.500" fill="none" />
      <Badge kind="plus" />
    </g>
  ),
  eye: (
    <g>
      <path d="M1 26Q24 2 46 26Q24 42 1 26Z" fill="#fff" stroke="#555" strokeWidth="1.500" />
      <circle cx="24" cy="23" r="10.500" fill="#7fa5d0" stroke="#33547e" strokeWidth="1.500" />
      <circle cx="24" cy="23" r="4.500" fill="#111" />
      <path d="M2 17Q24 -4 46 17" stroke="#999" strokeWidth="2.500" fill="none" />
    </g>
  ),
  exprfilter: (
    <g>
      <Epsilon x="0" y="30" size="52" />
      <path d="M22 24H46V29L38 36V45H30V36L22 29Z" fill="#ddd" stroke="#777" strokeWidth="1.500" />
    </g>
  ),
  selexpr: (
    <g>
      <rect x="16" y="17" width="28" height="28" fill="#fce94f" stroke="#c7a300" strokeWidth="2" />
      <Epsilon x="0" y="32" size="52" />
    </g>
  ),
  selall: <path d="M3 4H45V13H3ZM3 19H45V28H3ZM3 34H45V43H3Z" fill="#fce94f" stroke="#c7a300" strokeWidth="2.500" />,
  invert: (
    <g>
      <path d="M5 4V44H44Z" fill="#fce94f" stroke="#c7a300" strokeWidth="2.500" />
      <path d="M8 3H44V40Z" fill="#ececec" stroke="#888" strokeWidth="1.500" />
    </g>
  ),
  desel1: (
    <g>
      <rect x="3" y="4" width="29" height="27" fill="#fce94f" stroke="#c7a300" strokeWidth="2.500" />
      <Badge kind="no" />
    </g>
  ),
  movetop: (
    <g>
      <Table />
      <rect x="5" y="33" width="38" height="10" fill="#fce94f" stroke="#c7a300" strokeWidth="2" />
      <path d="M24 5L34 16H27V31H21V16H14Z" fill="#5b8bc4" stroke="#2f5583" strokeWidth="1.500" />
    </g>
  ),
  panrow: (
    <g>
      <rect x="5" y="5" width="28" height="28" fill="#fce94f" stroke="#c7a300" strokeWidth="2.500" />
      <path d="M24 2l8 10h-5v9h10v-5l10 8l-10 8v-5H27v9h5l-8 11l-8-11h5v-9H11v5L1 24l10-8v5h10V12h-5z" fill="#5b8bc4" stroke="#2f5583" strokeWidth="1.500" />
    </g>
  ),
  zoomrow: (
    <g>
      <rect x="6" y="5" width="28" height="27" fill="#fce94f" stroke="#c7a300" strokeWidth="2.500" />
      <Lens />
    </g>
  ),
  tablenew: (
    <g>
      <Table />
      <Badge kind="sun" />
    </g>
  ),
  tabledel: (
    <g>
      <Table />
      <rect x="27" y="28" width="20" height="19" rx="3" fill="#a33" />
      <path d="M32 33l10 10M42 33l-10 10" stroke="#fff" strokeWidth="3" />
    </g>
  ),
  tableedit: (
    <g>
      <Table />
      <Pencil body="#e07b2c" x="8" y="-2" s=".95" />
    </g>
  ),
  condformat: (
    <g>
      <rect x="3" y="3" width="42" height="12" fill="#f4f4f4" stroke="#aaa" strokeWidth="1.500" />
      <rect x="3" y="18" width="42" height="12" fill="#a9dba4" stroke="#5da257" strokeWidth="1.500" />
      <rect x="3" y="33" width="42" height="12" fill="#f4f4f4" stroke="#aaa" strokeWidth="1.500" />
      <path d="M22 6h18v6h-18z" fill="#fff" stroke="#555" strokeWidth="1.500" />
      <path d="M22 21h18v6h-18z" fill="#fff" stroke="#555" strokeWidth="1.500" />
      <path d="M9 36h28v6h-28z" fill="#d33" />
    </g>
  ),
  actions: (
    <g>
      <circle cx="22" cy="20" r="14" fill="#5b8bc4" stroke="#e8e8e8" strokeWidth="4" />
      <circle cx="22" cy="20" r="17.500" fill="none" stroke="#e8e8e8" strokeWidth="4" strokeDasharray="6.500 7.240" />
      <path d="M18 13L29 20L18 27Z" fill="#fff" />
      <Cursor x="29" y="22" s=".85" />
    </g>
  ),
  formview: (
    <g>
      <rect x="4" y="4" width="40" height="40" fill="#f4f8fc" stroke="#5f97cf" strokeWidth="2.500" />
      <path d="M9 14h7v5h-7zM9 30h7v5h-7z" fill="#333" />
      <path d="M24 9h14v13h-14zM24 26h14v13h-14zM18 16h6M18 32h6" fill="#fff" stroke="#5f97cf" strokeWidth="2.500" />
    </g>
  ),
  database: (
    <g fill="#e9e9e9" stroke="#9a9a9a" strokeWidth="1.800">
      <path d="M7 9V39Q7 44 24 44Q41 44 41 39V9Z" />
      <ellipse cx="24" cy="9" rx="17" ry="5.500" />
      <path d="M7 20Q7 25 24 25Q41 25 41 20M7 30Q7 35 24 35Q41 35 41 30" fill="none" />
    </g>
  ),
  point: (
    <g>
      <Node x="10" y="37" r="3.500" stroke="#888" />
      <Node x="16" y="16" r="3.500" stroke="#888" />
      <Node x="37" y="7" r="3.500" stroke="#888" />
    </g>
  ),
  line: (
    <g>
      <path d="M4 14L16 41L31 7H43" stroke="#8d8d8d" strokeWidth="2.500" fill="none" />
      <Node x="4" y="13" r="3.300" fill="#ddd" stroke="#888" />
      <Node x="16" y="40" r="3.300" fill="#ddd" stroke="#888" />
      <Node x="31" y="7" r="3.300" fill="#ddd" stroke="#888" />
      <Node x="43" y="7" r="3.300" fill="#ddd" stroke="#888" />
    </g>
  ),
  polygon: (
    <path
      d="M6 7Q14 4 21 9Q28 13 36 9Q44 5 46 8Q48 18 45 29Q42 31 36 29Q26 26 20 30Q12 39 6 37Q2 35 2 23Q2 10 6 7Z"
      fill="url(#bone)"
      stroke="#a9a9a0"
      strokeWidth="1.800"
    />
  ),
  hana: (
    <g>
      <rect x="4" y="3" width="40" height="42" fill="none" stroke="#355a86" strokeWidth="7" strokeDasharray="4 5" />
      <rect x="8" y="8" width="32" height="32" fill="#6d97c7" stroke="#1e1e1e" strokeWidth="2" />
    </g>
  ),
  mssql: (
    <g>
      <path d="M2 3Q34 4 47 27Q30 32 2 45Q20 26 2 3Z" fill="#6d97c7" stroke="#33547e" strokeWidth="2" />
      <path d="M15 6Q25 18 18 34M26 10Q34 22 28 31M37 17Q41 24 38 29" stroke="#33547e" strokeWidth="2" fill="none" />
    </g>
  ),
  oracle: <rect x="3" y="9" width="42" height="29" rx="13" fill="#6d97c7" stroke="#3f5f86" strokeWidth="4.500" />,
  wms: <Globe cx={24} cy={24} r={22} />,
  qprov: (
    <g>
      <circle cx="24" cy="23" r="17" fill="none" stroke="url(#qg)" strokeWidth="9" />
      <path d="M21 18L27 17L33 24L28 29L21 24Z" fill="#ee7913" />
      <path d="M28 23L33 24L46 38V45H40L26 30Z" fill="#5f9a36" stroke="#1e1e1e" strokeWidth="1.200" />
      <path d="M27.500 28.500L32.500 24" stroke="#f4e84c" strokeWidth="3" />
    </g>
  ),
  gdal: (
    <g>
      <circle cx="29" cy="28" r="18" fill="#6cc5ef" />
      <path d="M22 14Q30 8 38 14L34 24L24 26ZM34 30L42 34L36 42Z" fill="#3c8c50" />
      <path d="M16 16L18 38M18 16L30 24L18 30" stroke="#c33" strokeWidth="1.500" fill="none" />
      <path d="M2 14L24 2" stroke="#666" strokeWidth="6" strokeDasharray="9 4" />
      <text x="0" y="45" textLength="46" lengthAdjust="spacingAndGlyphs" fontFamily="Open Sans, sans-serif" fontWeight="700" fontSize="22" fill="#050505">
        GDAL
      </text>
    </g>
  ),
  gmaps: (
    <g>
      <rect x="6" y="8" width="35" height="35" rx="2" fill="#1aa15f" />
      <path d="M8 43L24 27L40 43Z" fill="#4285f4" />
      <path d="M26 25L41 12V41Z" fill="#eee" />
      <path d="M7 42L34 15" stroke="#ffd64a" strokeWidth="5" />
      <text x="9" y="22" fontFamily="Open Sans, sans-serif" fontWeight="700" fontSize="14" fill="#fff">
        G
      </text>
      <path d="M36 32Q34 24 30 19A8.500 8.500 0 1 1 42 19Q38 24 36 32Z" fill="#dd4b3e" />
      <circle cx="36" cy="13" r="3" fill="#7b231c" />
    </g>
  ),
  grass: (
    <g>
      <path d="M24 4L42 22L24 42L6 22Z" fill="#101010" stroke="#050505" strokeWidth="2" />
      <path d="M10 28L24 44L38 28M6 44H42" stroke="#050505" strokeWidth="2" fill="none" />
      <path d="M24 36V7M23 35L15 20M25 35L33 19M23 34L14 27M26 34L34 26" stroke="#0a8a0a" strokeWidth="1.600" />
    </g>
  ),
};

const SharedGradients = () => (
  <svg width="0" height="0" viewBox="0 0 1 1">
    <defs>
      <radialGradient id="lens" cx=".4" cy=".3" r=".8">
        <stop offset="0" stopColor="#f6f6f4" />
        <stop offset="1" stopColor="#b4b4b2" />
      </radialGradient>
      <linearGradient id="vgrad" x2="1" y2="1">
        <stop offset="0" stopColor="#e8f0fa" />
        <stop offset="1" stopColor="#6d97c7" />
      </linearGradient>
      <linearGradient id="qg" x2="0" y2="1">
        <stop offset="0" stopColor="#93b023" />
        <stop offset="1" stopColor="#589632" />
      </linearGradient>
      <linearGradient id="bone" x2="0" y2="1">
        <stop offset="0" stopColor="#f2f2f0" />
        <stop offset="1" stopColor="#cfcfcd" />
      </linearGradient>
    </defs>
  </svg>
);

const Icon = ({ name, size = 48 }) => (
  <svg width={size} height={size} viewBox="0 0 48 48">
    {icons[name]}
  </svg>
);

/* ---------- shared controls ---------- */

const Triangle = styled.i`
  display: block;
  width: ${(p) => p.$w || 16}px;
  height: ${(p) => p.$h || 8}px;
  background: ${(p) => p.$color || '#b4b4b4'};
  clip-path: ${(p) =>
    ({
      down: 'polygon(0 0, 100% 0, 50% 100%)',
      up: 'polygon(50% 0, 100% 100%, 0 100%)',
      right: 'polygon(0 0, 100% 50%, 0 100%)',
      left: 'polygon(100% 0, 100% 100%, 0 50%)',
    })[p.$dir || 'down']};
`;

const ToolButton = styled.span`
  position: relative;
  display: flex;
  align-items: center;
  justify-content: center;
  flex: none;
  width: ${(p) => p.$w || 66}px;
  height: 62px;
  & > svg {
    opacity: ${(p) => (p.$off ? 0.32 : 1)};
    filter: ${(p) => (p.$off ? 'grayscale(.35)' : 'none')};
  }
  ${(p) =>
    p.$active &&
    css`
      width: 62px;
      margin: 0 2px;
      border: 2px solid #4c4c4c;
      border-radius: 5px;
      background: #2e2e2e;
      box-shadow: 0 0 0 1.500px #222;
    `}
`;

const CornerArrow = styled(Triangle)`
  position: absolute;
  right: ${(p) => p.$right || 8}px;
  bottom: ${(p) => p.$bottom || 4}px;
`;

const MenuArrow = styled.span`
  width: 24px;
  display: flex;
  align-items: center;
  padding-left: 3px;
`;

const GripBox = styled.span`
  width: ${(p) => (p.$first ? 23 : 32)}px;
  padding-left: ${(p) => (p.$first ? 8 : 17)}px;
  flex: none;
`;

const GripDots = styled.i`
  display: block;
  width: ${(p) => (p.$flat ? 34 : p.$thin ? 4 : 10)}px;
  height: ${(p) => (p.$flat ? 4 : 34)}px;
  background: repeating-linear-gradient(${(p) => (p.$flat ? 90 : 180)}deg, #7e7e7e 0 4px, transparent 4px 6px);
  ${(p) =>
    !p.$flat &&
    !p.$thin &&
    css`
      mask: linear-gradient(90deg, #000 0 4px, transparent 4px 6px, #000 6px 10px);
    `}
`;

const Separator = styled.span`
  width: 14px;
  height: ${(p) => p.$h || 38}px;
  flex: none;
  background: linear-gradient(90deg, transparent 6px, #282828 6px 8px, #3c3c3c 8px 9px, transparent 9px);
`;

const ToolStrip = ({ items, size = 48, cell = 66 }) =>
  items.map((item, i) => {
    if (item === '|') return <Separator key={i} $h={size === 48 ? 38 : 28} />;
    if (item === ':')
      return (
        <GripBox key={i} $first={i === 0}>
          <GripDots />
        </GripBox>
      );
    const [name, flags = ''] = item.split(' ');
    return (
      <React.Fragment key={i}>
        <ToolButton $w={cell} $off={flags.includes('o')} $active={flags.includes('a')}>
          <Icon name={name} size={size} />
          {flags.includes('c') && <CornerArrow $w={12} $h={6} $right={7} $bottom={size === 48 ? 4 : 16} />}
        </ToolButton>
        {flags.includes('m') && (
          <MenuArrow>
            <Triangle $w={16} $h={9} />
          </MenuArrow>
        )}
      </React.Fragment>
    );
  });

/* ---------- main window ---------- */

const Window = styled.div`
  width: 2996px;
  height: 2076px;
  display: flex;
  flex-direction: column;
  background: #323232;
  border-radius: 18px 18px 16px 16px;
  overflow: hidden;
  position: relative;
`;

const TitleBar = styled.header`
  height: 49px;
  flex: none;
  display: grid;
  grid-template-columns: 400px 1fr 400px;
  align-items: center;
  padding: 0 0 8px;
  background: #2c2b29;
  border-bottom: 1px solid #000;
`;

const Lights = styled.div`
  display: flex;
  gap: 16px;
  padding-left: 14px;
`;

const Light = styled.i`
  width: 24px;
  height: 24px;
  border-radius: 50%;
  background: ${(p) => p.$color};
`;

const WindowTitle = styled.h1`
  margin: 0;
  padding-left: ${(p) => p.$shift || 0}px;
  text-align: center;
  font-size: 26px;
  line-height: 32px;
  font-weight: 700;
  color: ${(p) => p.$color};
  letter-spacing: ${(p) => p.$ls || 0}px;
  white-space: nowrap;
`;

const ToolbarRow = styled.nav`
  height: 78px;
  flex: none;
  display: flex;
  align-items: center;
  padding-bottom: 3px;
  background: linear-gradient(#353535, #313131);
  border-bottom: 1px solid #7c7c7a;
  box-shadow: inset 0 -3px #282828;
`;

const Body = styled.div`
  height: ${2020 - 283}px;
  border-top: 1px solid #2a2a2a;
  flex: none;
  display: grid;
  grid-template-columns: 424px 16px 1902px 15px 1fr;
`;

const SideColumn = styled.aside`
  display: flex;
  flex-direction: column;
  min-width: 0;
  min-height: 0;
`;

const PanelHead = styled.div`
  height: 34px;
  flex: none;
  display: flex;
  align-items: center;
  gap: 7px;
  padding: 0 2px 0 6px;
  font-size: 22px;
  color: #e6e6e6;
`;

const PanelName = styled.span`
  flex: 1;
`;

const PanelTools = styled.div`
  height: ${(p) => p.$h}px;
  flex: none;
  display: flex;
  align-items: center;
  padding-left: 4px;
`;

const Gutter = styled.div`
  padding: 855px 0 0 8px;
  background: #303030;
`;

const Overflow = styled.span`
  margin-left: ${(p) => p.$left}px;
  color: #444;
  font-size: 24px;
  line-height: 30px;
`;

const TreeBox = styled.div`
  height: 774px;
  flex: none;
  display: grid;
  grid-template-columns: 396px 28px;
  border-top: 1px solid #262626;
`;

const TreeList = styled.div`
  background: #1e1e1e;
  overflow: hidden;
`;

const TreeRow = styled.div`
  height: 36px;
  display: flex;
  align-items: center;
  padding-left: ${(p) => p.$pad}px;
  background: ${(p) => (p.$selected ? '#464646' : 'transparent')};
  color: ${(p) => (p.$selected ? '#fff' : '#dedede')};
  font-size: 26px;
  white-space: nowrap;
`;

const Twisty = styled.span`
  width: ${(p) => p.$w}px;
  display: flex;
  flex: none;
`;

const TreeText = styled.span`
  margin: -2px 0 0 12px;
  letter-spacing: ${(p) => p.$ls ?? -0.4}px;
`;

const ScrollBar = styled.div`
  display: flex;
  flex-direction: ${(p) => (p.$row ? 'row' : 'column')};
  gap: 3px;
  padding: 1px;
  min-height: 0;
  background: #2f2f2f;
`;

const ScrollButton = styled.span`
  display: flex;
  align-items: center;
  justify-content: center;
  flex: none;
  width: 26px;
  height: 25px;
  background: #3a3a3a;
  border: 2px solid #515151;
`;

const ScrollGap = styled.span`
  flex: ${(p) => p.$size} 0 0;
`;

const ScrollThumb = styled.span`
  flex: ${(p) => p.$size} 0 0;
  border: 2px solid #515151;
  background: linear-gradient(90deg, #3f3f3f, #3a3a3a);
`;

const HBarRow = styled.div`
  height: 27px;
  flex: none;
  display: grid;
  grid-template-columns: 396px 28px;
`;

const SplitHandle = styled.div`
  height: 16px;
  flex: none;
  display: flex;
  justify-content: center;
  align-items: center;
  padding-left: 6px;
`;

const LayerList = styled.div`
  flex: 1;
  background: #1e1e1e;
  border-top: 1px solid #262626;
`;

const LayerRow = styled.div`
  height: 36px;
  display: grid;
  grid-template-columns: 28px 32px 1fr 32px;
  column-gap: 12px;
  align-items: center;
  padding: 0 10px 0 46px;
  background: ${(p) => (p.$selected ? '#464646' : 'transparent')};
`;

const LayerName = styled.span`
  padding-left: 1px;
  font-size: 26px;
  line-height: 30px;
  font-weight: 700;
  color: ${(p) => (p.$off ? '#8d8d8d' : p.$selected ? '#fff' : '#e0e0e0')};
  font-style: ${(p) => (p.$off ? 'italic' : 'normal')};
  text-decoration: ${(p) => (p.$selected ? 'underline' : 'none')};
  text-underline-offset: 4px;
  text-decoration-thickness: 2px;
  letter-spacing: ${(p) => (p.$off ? 0.2 : -0.1)}px;
`;

const Check = styled.span`
  width: 28px;
  height: 28px;
  flex: none;
  display: flex;
  align-items: center;
  justify-content: center;
  background: #1c1c1c;
  border: 2px solid #262626;
`;

const Swatch = styled.i`
  margin: ${(p) => (p.$shape === 'dot' ? '0 0 0 7px' : '0')};
  width: ${(p) => (p.$shape === 'dot' ? '17px' : 'auto')};
  height: ${(p) => ({ dot: 17, box: 32, line: 2 })[p.$shape]}px;
  border-radius: ${(p) => (p.$shape === 'dot' ? '50%' : 0)};
  background: ${(p) => p.$color};
`;

const MapCanvas = styled.main`
  background: #fff;
  overflow: hidden;
`;

const ToolboxList = styled.div`
  flex: 1;
  background: #1e1e1e;
  padding-top: 796px;
`;

const DockIcon = ({ kind }) => (
  <svg width="22" height="22" viewBox="0 0 22 22" fill="none" stroke="#85857f" strokeWidth="1.700">
    <rect x="1" y="1" width="20" height="20" rx="2" />
    {kind === 'float' ? <path d="M8 8V5H17V13H14M5 8H14V17H5Z" /> : <path d="M6 6L16 16M16 6L6 16" strokeWidth="4" />}
  </svg>
);

const Panel = ({ title }) => (
  <PanelHead>
    <PanelName>{title}</PanelName>
    <DockIcon kind="float" />
    <DockIcon kind="close" />
  </PanelHead>
);

const Tick = () => (
  <svg width="18" height="20" viewBox="0 0 18 20">
    <path d="M2 11L7 17L16 2" stroke="#c9c9c9" strokeWidth="3" fill="none" />
  </svg>
);

/* ---------- map ---------- */

const wiggle = (pts, amp, step, seed) => {
  let n = seed * 7919;
  const rnd = () => {
    n = (n * 16807) % 2147483647;
    return (n / 2147483647 - 0.5) * 2 * amp;
  };
  const out = [];
  for (let i = 0; i < pts.length - 1; i += 1) {
    const [x1, y1] = pts[i];
    const [x2, y2] = pts[i + 1];
    const k = Math.max(1, Math.round(Math.hypot(x2 - x1, y2 - y1) / step));
    for (let j = 0; j < k; j += 1) {
      const jitter = i + j === 0 ? 0 : 1;
      out.push([x1 + ((x2 - x1) * j) / k + rnd() * jitter, y1 + ((y2 - y1) * j) / k + rnd() * jitter]);
    }
  }
  out.push(pts[pts.length - 1]);
  return out.map((p) => p.map((v) => v.toFixed(1)).join(',')).join(' ');
};

const rivers = [
  [[458.5, 147], [459, 163], [463, 173], [474, 173], [482, 181], [497, 182], [501, 188], [501, 198], [500, 205], [506, 212], [501, 218], [508, 220], [504, 231], [501, 238.5]],
  [[368, 501], [374, 509], [376, 520], [384, 528], [386, 535], [392, 538], [391, 546], [398, 551], [404, 557], [398, 570], [406, 575]],
  [[555, 440], [566, 443], [578, 446], [584, 449], [583, 457], [592, 461], [600, 466], [609, 467], [612, 481]],
  [[628, 448], [631, 456], [629, 470.5]],
  [[748.5, 684], [757, 668], [767, 661], [783, 660], [798, 653], [820, 646], [840, 647]],
  [[891.5, 583], [900, 583], [909, 582], [915, 587], [921, 583], [932, 585]],
  [[1166, 588], [1167, 604], [1163, 612], [1162, 630], [1155, 645], [1141, 656], [1136, 664], [1133, 680], [1128, 690], [1115, 690], [1102, 684], [1097, 675], [1089, 667]],
  [[971, 741], [972.5, 744.5]],
  [[868, 951], [880, 954], [891, 958], [902, 950], [903, 940]],
  [[629, 927], [620, 938], [610, 948], [602, 960], [602, 975], [600, 989], [590, 993], [585, 1000], [579, 1004]],
  [[744, 578.5], [750, 570], [756, 576], [767, 570], [780, 560], [790, 552], [806, 547], [820, 549], [823, 560], [819, 570], [828, 578], [840, 582], [855, 584]],
  [[744, 578.5], [758, 574], [770, 569], [782, 559], [793, 553], [806, 548], [818, 547], [820, 560], [817, 572], [826, 580], [843, 584], [855, 585]],
];

const detailedRivers = [
  '371,10 370,30 360,42 338,48 348,60 356,64 361,86 346,94 350,106 337,108 332,130 340,148 352,150 361,162 359,196 373,206 403,262 398,304 387,314 394,326 392,349 368,354 360,340 355,362 346,370 342,384 333,386 331,404 318,408 320,424 306,442 303,480 296,495 296,536 286,558 293,570 276,580 292,578 280,608 270,614 279,650 282,668 298,650 300,624 309,624 290,612 302,600 314,596 306,576 304,534 306,480 303,460',
  '1492,10 1474,18 1462,32 1444,40 1402,38 1380,68 1358,60 1330,86 1310,96 1290,106 1278,120 1262,112 1234,122 1222,128 1210,148 1188,180 1165,208 1162,228 1141,252 1143,278 1122,300 1126,330 1130,358 1116,370 1103,396 1122,430 1112,456 1128,480 1112,514 1092,534 1084,560 1094,590 1076,610 1062,630 1070,654 1042,664 1048,694 1042,736 1047,770 1044,800 1032,806 1031,826 1018,836 1016,850 1004,853 982,880 954,894 948,922 926,942 904,934 894,938 882,926 864,950 862,976 842,976 830,986 820,978 810,996 784,994 754,1006 738,1008 720,1030 708,1054 690,1060 684,1072 680,1110 666,1128 648,1132 648,1162 632,1154 618,1166 590,1164 578,1168 584,1196 562,1208 546,1200 538,1230 526,1240 522,1268 500,1274 488,1276 492,1294 508,1274',
  '1420,10 1396,24 1356,44 1346,64 1326,66 1322,84 1300,90 1275,104 1272,118 1250,126 1236,116 1224,124 1188,148 1180,170 1160,178 1158,208 1162,226 1126,262 1108,304 1108,340 1098,392 1102,430 1098,462 1110,478 1094,488 1078,530 1082,568 1090,604 1066,614 1034,662 1046,692 1042,728 1026,740 1032,770 1046,800 1034,806',
  '1435,12 1400,34 1364,48 1360,66 1322,84',
  '754,1006 746,1026 724,1034',
  '686,1066 692,1110 674,1138 664,1168 648,1160 674,1138 650,1136',
  '640,1160 612,1198 600,1180 580,1200 566,1222 548,1228 544,1256 526,1258 522,1240 548,1244',
];

const sites = [[700.5, 624.5], [691.5, 656.5], [691.5, 659], [703.5, 665.5], [698, 673.5], [690, 676], [685.5, 678], [720.5, 673.5], [755.5, 684.5], [787, 689], [769.5, 698]];

const MapView = () => (
  <svg width="1902" height="1736" viewBox="440 284 1902 1736">
    <g transform="scale(1.91071)">
      <polygon
        points="700,340 787,354 868,395 934,460 983,530 1010,572 1044,572 1058,606 1072,689 1058,776 1018,857 954,918 860,968 769,982 682,968 663,961 600,948 519,908 455,845 415,766 402,678 414,592 422,567 428,555 431,536 471,457 534,394 613,353"
        fill="#f9f3e1"
        stroke="#d9d5ca"
        strokeWidth="1"
      />
      {rivers.map((r, i) => (
        <polyline key={i} points={wiggle(r, 1.15, 2.2, i + 7)} fill="none" stroke="#1414ee" strokeWidth=".9" />
      ))}
    </g>
    <g transform="translate(1160 280) scale(.37 .33333)" fill="none" stroke="#1414ee" strokeWidth="1.700">
      {detailedRivers.map((d) => (
        <polyline key={d} points={d} vectorEffect="non-scaling-stroke" />
      ))}
    </g>
    <g fill="#82b573" stroke="#33432c" strokeWidth="1.400">
      {sites.map(([x, y]) => (
        <circle key={`${x}${y}`} cx={x * 1.91071} cy={y * 1.91071} r="6" />
      ))}
    </g>
  </svg>
);

/* ---------- status bar ---------- */

const StatusBar = styled.footer`
  height: 56px;
  flex: none;
  display: flex;
  align-items: center;
  padding: 8px 0 0 7px;
  background: linear-gradient(#343434, #2d2d2d);
  border-top: 1px solid #282828;
  font-size: 22px;
  line-height: 30px;
  color: #eee;
  white-space: nowrap;
`;

const Field = styled.span`
  width: ${(p) => p.$w}px;
  height: 43px;
  flex: none;
  display: flex;
  align-items: center;
  gap: 12px;
  padding-left: ${(p) => p.$pad || 8}px;
  background: #1e1e1e;
  border: 2px solid #262626;
  border-radius: 5px;
  color: ${(p) => p.$color || '#e0e0e0'};
  font-size: ${(p) => p.$size || 22}px;
`;

const Label = styled.span`
  width: ${(p) => p.$w}px;
  flex: none;
  letter-spacing: ${(p) => p.$ls || 0}px;
  color: ${(p) => p.$color || '#eee'};
`;

const Grow = styled.span`
  flex: 1;
`;

const DropPart = styled.span`
  margin-left: auto;
  align-self: stretch;
  width: ${(p) => p.$w}px;
  display: flex;
  flex-direction: column;
  align-items: center;
  justify-content: center;
  gap: 9px;
  background: #3c3c3c;
  border: 1px solid #505050;
`;

const Gap = styled.span`
  width: ${(p) => p.$w}px;
  flex: none;
`;

const Slot = styled.span`
  width: ${(p) => p.$w}px;
  flex: none;
  display: flex;
  justify-content: center;
`;

/* ---------- attribute window ---------- */

const AttrWindow = styled.section`
  position: absolute;
  left: 1730px;
  top: 284px;
  width: 1259px;
  height: 804px;
  display: flex;
  flex-direction: column;
  border-radius: 20px;
  background: #323232;
  border: 2px solid #5e5e5c;
  border-top-color: #7a7a78;
  overflow: hidden;
`;

const WindowShadow = styled.div`
  position: absolute;
  left: 1730px;
  top: 0;
  width: 1259px;
  height: 804px;
  border-radius: 20px;
  box-shadow: 0 0 0 1.500px #000, 0 36px 76px 6px rgba(0, 0, 0, 0.620);
`;

const ShadowClip = styled.div`
  position: absolute;
  inset: 284px 0 0 0;
  overflow: hidden;
`;

const AttrTitle = styled.header`
  height: 55px;
  flex: none;
  display: grid;
  grid-template-columns: 130px 1fr 130px;
  align-items: center;
  padding: 0 4px 2px 0;
  background: #3a3a38;
  border-bottom: 2px solid #000;
`;

const AttrTools = styled.nav`
  height: 62px;
  flex: none;
  display: flex;
  align-items: center;
  padding: 0 0 4px 4px;
`;

const AttrBody = styled.div`
  height: 625px;
  flex: none;
  display: grid;
  grid-template-columns: 1228px 27px;
  border-top: 2px solid #282828;
`;

const Grid = styled.div`
  display: flex;
  flex-direction: column;
  min-height: 0;
  background: #1e1e1e;
`;

const columns = '34px repeat(5, 200px)';

const HeadRow = styled.div`
  height: 33px;
  flex: none;
  display: grid;
  grid-template-columns: ${columns} 1fr;
  background: #323232;
  font-size: 22px;
  color: #000;
`;

const HeadCell = styled.span`
  display: flex;
  align-items: center;
  justify-content: center;
  padding-left: 4px;
  background: linear-gradient(#424242, #383838);
  border-top: 1px solid #555;
  border-bottom: 2px solid #2a2a2a;
  border-right: 2px solid #505050;
  letter-spacing: 0.200px;
  &:first-child, &:nth-child(6) { border-right: 0; }
`;

const DataView = styled.div`
  flex: 1;
  min-height: 0;
  overflow: hidden;
  display: flex;
  flex-direction: column;
  justify-content: flex-end;
`;

const DataRow = styled.div`
  height: 60px;
  flex: none;
  display: grid;
  grid-template-columns: ${columns};
  font-size: 26px;
  color: #e2e2e2;
`;

const NumCell = styled.span`
  display: flex;
  align-items: center;
  padding: 0 0 0 3px;
  background: #3a3a3a;
  border-top: 2px solid #4a4a4a;
  border-bottom: 2px solid #262626;
  border-right: 2px solid #262626;
  font-size: 22px;
  color: #000;
`;

const Cell = styled.span`
  display: flex;
  align-items: center;
  justify-content: ${(p) => (p.$right ? 'flex-end' : 'flex-start')};
  padding: 0 7px 3px 8px;
  background: ${(p) => (p.$alt ? '#292929' : '#1e1e1e')};
  border-right: 1px solid ${(p) => (p.$alt ? '#202020' : '#282828')};
  border-bottom: 2px solid #262626;
  letter-spacing: ${(p) => p.$ls || 0}px;
  white-space: nowrap;
`;

const AttrFooter = styled.footer`
  flex: 1;
  display: flex;
  align-items: center;
  padding: 0 5px 0 5px;
  border-top: 1px solid #262626;
`;

const ShowButton = styled.button`
  position: relative;
  width: 303px;
  height: 43px;
  display: flex;
  align-items: center;
  gap: 6px;
  padding: 0 0 0 4px;
  border: 2px solid #585858;
  border-radius: 5px;
  background: linear-gradient(#424242, #383838);
  font: 20.200px ${sans};
  color: #000;
  white-space: nowrap;
`;

const ViewSwitch = styled.span`
  display: flex;
  align-items: center;
  justify-content: center;
  width: 44px;
  height: 43px;
  border-radius: 5px;
  border: 2px solid ${(p) => (p.$on ? '#585858' : 'transparent')};
  background: ${(p) => (p.$on ? '#2a2a2a' : 'transparent')};
`;

/* ---------- data ---------- */

const fileTools = [
  ':', 'new', 'open', 'save', 'newlayout', 'layoutmgr', 'style', ':', 'hand a', 'pansel o', 'zoomin', 'zoomout', 'zoomfull', 'zoomsel o', 'zoomlayer',
  'zoomnative o', 'zoomlast', 'zoomnext o', 'newmap', 'new3d', 'bookmark', 'bookmarks', 'clock', 'refresh', ':', 'identify', 'abacus', 'gear a', 'sigma',
  'table m', 'ruler m', 'tip', 'gearcursor om',
];
const editTools = [
  ':', 'layers', 'geopackage', 'shapefile', 'spatialite', 'memory', 'mesh', 'vlayer', ':', 'edits oc', 'pencil', 'saveedits o', 'digitize om', 'points o',
  'vertex om', 'modify o', 'trash o', 'cut o', 'copy o', 'paste o', 'undo o', 'redo o', ':', 'tag', 'chart', '|', 'tagpin', 'tagred', '|', 'tagpinoff o',
  'tageye o', 'tagmove o', 'tagrotate o', 'tagedit o', ':', 'ors', 'metasearch', ':', 'python', 'qgis', ':', 'help', ':', 'sheet',
];
const selectTools = [
  ':', 'select m', 'selform m', 'deselect m', 'selloc m', ':', 'meshedit o', 'meshsel om', 'meshtrans o', 'meshdigit om', ':', 'annolayer m', 'annosel',
  'annopoly', 'annoline', 'annostar', 'annotext', 'annocurve', '|', 'callout m', ':', 'snapcad', 'crosshair o', '|', 'snapping c', 'tracing o', 'snapnew',
  'broom o', '|', 'info', 'wrench c',
];
const attrTools = [
  'pencil', 'modify o', 'saveedits o', 'refresh', '|', 'tablenew oc', 'trash o', 'cut o', 'copy o', 'paste o', '|', 'selexpr', 'selall', 'invert', 'desel1',
  'funnel', 'movetop', 'panrow', 'zoomrow', '|', 'tablenew o', 'tabledel o', 'tableedit', 'abacus', '|', 'condformat', '|', 'actions',
];
const tables = [
  ['airports', 'point'], ['alaska', 'polygon'], ['builtups', 'polygon'], ['grassland', 'polygon'], ['lakes', 'polygon'], ['landice', 'polygon'],
  ['majrivers', 'line'], ['pipelines', 'line'], ['popp', 'point'], ['railroads', 'line'], ['regions', 'polygon'], ['rivers', 'line'],
  ['storagep', 'point'], ['swamp', 'polygon'], ['trails', 'line'], ['trees', 'polygon'], ['tundra', 'polygon'],
];
const providers = [['SAP HANA', 'hana', -0.7], ['MS SQL Server', 'mssql', -0.4], ['Oracle', 'oracle', -0.3], ['WMS/WMTS', 'wms', -0.4]];
const layers = [
  ['bufon', 'dot', '#84b572', true], ['Bufor', 'box', '#3a3322', true], ['przyc', 'dot', '#bfd14f', true], ['rivers', 'line', '#1010b8', true],
  ['popp', 'dot', '#84b572', false], ['budynki', 'box', '#c43c39', false], ['regions', 'box', '#a87158', false],
];
const toolbox = [
  ['Wektor - geometria', 'qprov'], ['Wektor - tabela atrybutów', 'qprov'], ['Wektor - tworzenie', 'qprov'], ['Wektor - wybór', 'qprov'], ['Wykresy', 'qprov'],
  ['Azure Maps', 'gear'], ['GDAL', 'gdal'], ['Google maps', 'gmaps'], ['GRASS', 'grass'], ['ORS Tools', 'ors'],
];
const rows = [
  [2, '1501', '1501,000000…', 'Building', 'AL015', 'CANNERIES'],
  [3, '1503', '1503,00000…', 'Building', 'AL015', 'CANNERIES'],
  [4, '1505', '1505,00000…', 'Building', 'AL015', 'CANNERIES'],
  [5, '1508', '1508,00000…', 'Settlement', 'AL105', 'SAVONOSKI'],
  [6, '1509', '1509,00000…', 'Settlement', 'AL105', 'SOUTH NAK…'],
  [7, '1510', '1510,000000…', 'Building', 'AL015', 'CANNERIES'],
  [8, '1511', '1511,000000…', 'Building', 'AL015', 'CANNERIES'],
  [9, '1512', '1512,000000…', 'Settlement', 'AL105', 'KING SALMON'],
  [10, '1513', '1513,000000…', 'Camp', 'AI030', 'CAMPS'],
  [11, '1517', '1517,000000…', 'Camp', 'AI030', 'CAMPS'],
];

/* ---------- views ---------- */

const VScroll = ({ before, thumb, after }) => (
  <ScrollBar>
    <ScrollButton>
      <Triangle $dir="up" />
    </ScrollButton>
    <ScrollGap $size={before} />
    <ScrollThumb $size={thumb} />
    <ScrollGap $size={after} />
    <ScrollButton>
      <Triangle />
    </ScrollButton>
  </ScrollBar>
);

const Browser = () => (
  <>
    <Panel title="Przeglądarka" />
    <PanelTools $h={65}>
      <ToolStrip size={32} cell={50.5} items={['addlayer', 'refresh', 'funnel', 'collapse', 'info']} />
    </PanelTools>
    <TreeBox>
      <TreeList>
        <TreeRow $pad={72}>
          <Twisty $w={30}>
            <Triangle />
          </Twisty>
          <Icon name="database" size={32} />
          <TreeText>public</TreeText>
        </TreeRow>
        {tables.map(([name, icon]) => (
          <TreeRow key={name} $pad={108} $selected={name === 'rivers'}>
            <Twisty $w={26}>
              <Triangle $dir="right" $w={8} $h={16} />
            </Twisty>
            <Icon name={icon} size={32} />
            <TreeText>{name}</TreeText>
          </TreeRow>
        ))}
        {providers.map(([name, icon, ls]) => (
          <TreeRow key={name} $pad={38}>
            <Icon name={icon} size={32} />
            <TreeText $ls={ls}>{name}</TreeText>
          </TreeRow>
        ))}
      </TreeList>
      <VScroll before={173} thumb={405} after={136} />
    </TreeBox>
    <HBarRow>
      <ScrollBar $row>
        <ScrollButton>
          <Triangle $dir="left" $w={8} $h={16} />
        </ScrollButton>
        <ScrollThumb $size={330} />
        <ScrollGap $size={3} />
        <ScrollButton>
          <Triangle $dir="right" $w={8} $h={16} />
        </ScrollButton>
      </ScrollBar>
    </HBarRow>
  </>
);

const Layers = () => (
  <>
    <Panel title="Warstwy" />
    <PanelTools $h={65}>
      <ToolStrip size={32} cell={50} items={['brush', 'group', 'eye c', 'funnel c', 'exprfilter m', 'expand', 'collapse']} />
      <Overflow $left={22}>»</Overflow>
    </PanelTools>
    <LayerList>
      {layers.map(([name, shape, color, on], i) => (
        <LayerRow key={name + i} $selected={i === 0}>
          <Check>{on && <Tick />}</Check>
          <Swatch $shape={shape} $color={color} />
          <LayerName $off={!on} $selected={i === 0}>
            {name}
          </LayerName>
          {name === 'Bufor' && (
            <svg width="32" height="30" viewBox="0 0 32 30">
              <rect width="32" height="30" rx="3" fill="#232323" />
              <path d="M6 20V11H27" stroke="#363636" strokeWidth="2.500" fill="none" />
            </svg>
          )}
        </LayerRow>
      ))}
    </LayerList>
  </>
);

const AttributeTable = () => (
  <AttrWindow>
    <AttrTitle>
      <Lights>
        <Light $color="#ec6a5e" />
        <Light $color="#f4bf4f" />
        <Light $color="#61c554" />
      </Lights>
      <WindowTitle $color="#b4b4b2" $ls={0.17} $shift={11}>
        bufon — Łącznie obiektów: 11, odfiltrowanych: 11, wybranych: 0
      </WindowTitle>
    </AttrTitle>
    <AttrTools>
      <ToolStrip size={32} cell={50} items={attrTools} />
      <Overflow $left={8}>»</Overflow>
    </AttrTools>
    <AttrBody>
      <Grid>
        <HeadRow>
          <HeadCell />
          {['gid', 'cat', 'f_codedesc', 'f_code', 'type'].map((h) => (
            <HeadCell key={h}>{h}</HeadCell>
          ))}
        </HeadRow>
        <DataView>
          {rows.map(([n, gid, cat, desc, code, type]) => (
            <DataRow key={n}>
              <NumCell>{n}</NumCell>
              <Cell $right $alt={n % 2 === 0}>{gid}</Cell>
              <Cell $right $alt={n % 2 === 0} $ls={0.2}>{cat}</Cell>
              <Cell $alt={n % 2 === 0}>{desc}</Cell>
              <Cell $alt={n % 2 === 0} $ls={-0.1}>{code}</Cell>
              <Cell $alt={n % 2 === 0} $ls={-0.75}>{type}</Cell>
            </DataRow>
          ))}
        </DataView>
      </Grid>
      <VScroll before={101} thumb={464} after={0} />
    </AttrBody>
    <AttrFooter>
      <ShowButton>
        <Icon name="table" size={30} />
        pokaż wszystkie obiekty
        <CornerArrow $w={11} $h={6} $right={3} $bottom={5} />
      </ShowButton>
      <Grow />
      <ViewSwitch>
        <Icon name="formview" size={30} />
      </ViewSwitch>
      <Gap $w={4} />
      <ViewSwitch $on>
        <Icon name="table" size={30} />
      </ViewSwitch>
    </AttrFooter>
  </AttrWindow>
);

const Stepper = () => (
  <DropPart $w={26}>
    <Triangle $dir="up" $w={15} $h={8} />
    <Triangle $w={15} $h={8} />
  </DropPart>
);

const Status = () => (
  <StatusBar>
    <Field $w={421} $pad={15} $color="#9a9a9a" $size={25.2}>
      <svg width="28" height="28" viewBox="0 0 28 28" fill="none" stroke="#9a9a9a" strokeWidth="2.200">
        <circle cx="12" cy="11" r="8.500" />
        <path d="M18 18L26 26" />
      </svg>
      Szukana fraza (⌘K)
    </Field>
    <Gap $w={18} />
    <Label $color="#fff">Włącza/wyłącza tryb edycji aktywnej warstwy</Label>
    <Grow />
    <Label $w={149} $ls={0.3} $color="#d6d6d6">Współrzędne</Label>
    <Field $w={234} $pad={12}>
      -315099&nbsp; 3572296
    </Field>
    <Slot $w={54}>
      <svg width="30" height="32" viewBox="0 0 30 32">
        <path d="M3 4L14 24M10 2L13 22" stroke="#fff" strokeWidth="6" strokeLinecap="round" />
        <path d="M4 5L13 22M10 4L13 20" stroke="#111" strokeWidth="3" />
        <circle cx="18" cy="24" r="6" fill="#222" stroke="#fff" strokeWidth="3" />
        <path d="M22 6h3M26 12h3M19 11h3" stroke="#999" strokeWidth="2" />
      </svg>
    </Slot>
    <Gap $w={12} />
    <Label $w={65} $ls={0.2}>Skala</Label>
    <Field $w={184} $pad={5}>
      1:1043338
      <DropPart $w={39}>
        <Triangle $w={15} $h={9} $color="#1a1a1a" />
      </DropPart>
    </Field>
    <Slot $w={66}>
      <svg width="24" height="30" viewBox="0 0 24 30">
        <path d="M5 15V9Q5 2 12 2Q19 2 19 9V15" stroke="#999" strokeWidth="3" fill="none" />
        <rect x="0" y="14" width="24" height="16" rx="2" fill="#707070" />
      </svg>
    </Slot>
    <Label $w={155} $ls={0.3}>Powiększenie</Label>
    <Field $w={184} $pad={7}>
      100%
      <Stepper />
    </Field>
    <Gap $w={19} />
    <Label $w={79} $color="#d6d6d6">Obrót</Label>
    <Field $w={184} $pad={7}>
      0,0 °
      <Stepper />
    </Field>
    <Gap $w={13} />
    <Check>
      <Tick />
    </Check>
    <Gap $w={11} />
    <Label $w={126}>Renderuj</Label>
    <svg width="30" height="28" viewBox="0 0 30 28" fill="none" stroke="#333" strokeWidth="1.300">
      <circle cx="15" cy="14" r="13" fill="#9a9a9a" stroke="none" />
      <ellipse cx="15" cy="14" rx="6" ry="13" />
      <path d="M2 14H28M4 8H26M4 20H26M15 1V27" />
    </svg>
    <Gap $w={5} />
    <Label $w={168} $color="#000">EPSG:2964</Label>
    <svg width="32" height="30" viewBox="0 0 32 30">
      <path d="M16 1C25 1 31 6 31 13C31 18 29 20 26 22L28 30L19 25C8 27 1 20 1 13C1 6 7 1 16 1Z" fill="#8e8e8e" />
      <path d="M6 12h4v3h-4zM14 12h4v3h-4zM22 12h4v3h-4z" fill="#fff" />
    </svg>
    <Gap $w={57} />
  </StatusBar>
);

export default function App() {
  return (
    <Window>
      <GlobalStyle />
      <SharedGradients />
      <TitleBar>
        <Lights>
          <Light $color="#53524f" />
          <Light $color="#53524f" />
          <Light $color="#53524f" />
        </Lights>
        <WindowTitle $color="#6f6e6b">*Projekt bez nazwy — QGIS</WindowTitle>
      </TitleBar>
      <ToolbarRow>
        <ToolStrip items={fileTools} />
      </ToolbarRow>
      <ToolbarRow>
        <ToolStrip items={editTools} />
      </ToolbarRow>
      <ToolbarRow>
        <ToolStrip items={selectTools} />
      </ToolbarRow>
      <Body>
        <SideColumn>
          <Browser />
          <SplitHandle>
            <GripDots $flat />
          </SplitHandle>
          <Layers />
        </SideColumn>
        <Gutter>
          <GripDots $thin />
        </Gutter>
        <MapCanvas>
          <MapView />
        </MapCanvas>
        <Gutter>
          <GripDots $thin />
        </Gutter>
        <SideColumn>
          <ToolboxList>
            {toolbox.map(([name, icon]) => (
              <TreeRow key={name} $pad={17}>
                <Twisty $w={30}>
                  <Triangle $dir="right" $w={8} $h={16} />
                </Twisty>
                <Icon name={icon} size={32} />
                <TreeText $ls={-0.15}>{name}</TreeText>
              </TreeRow>
            ))}
          </ToolboxList>
        </SideColumn>
      </Body>
      <Status />
      <ShadowClip>
        <WindowShadow />
      </ShadowClip>
      <AttributeTable />
    </Window>
  );
}
